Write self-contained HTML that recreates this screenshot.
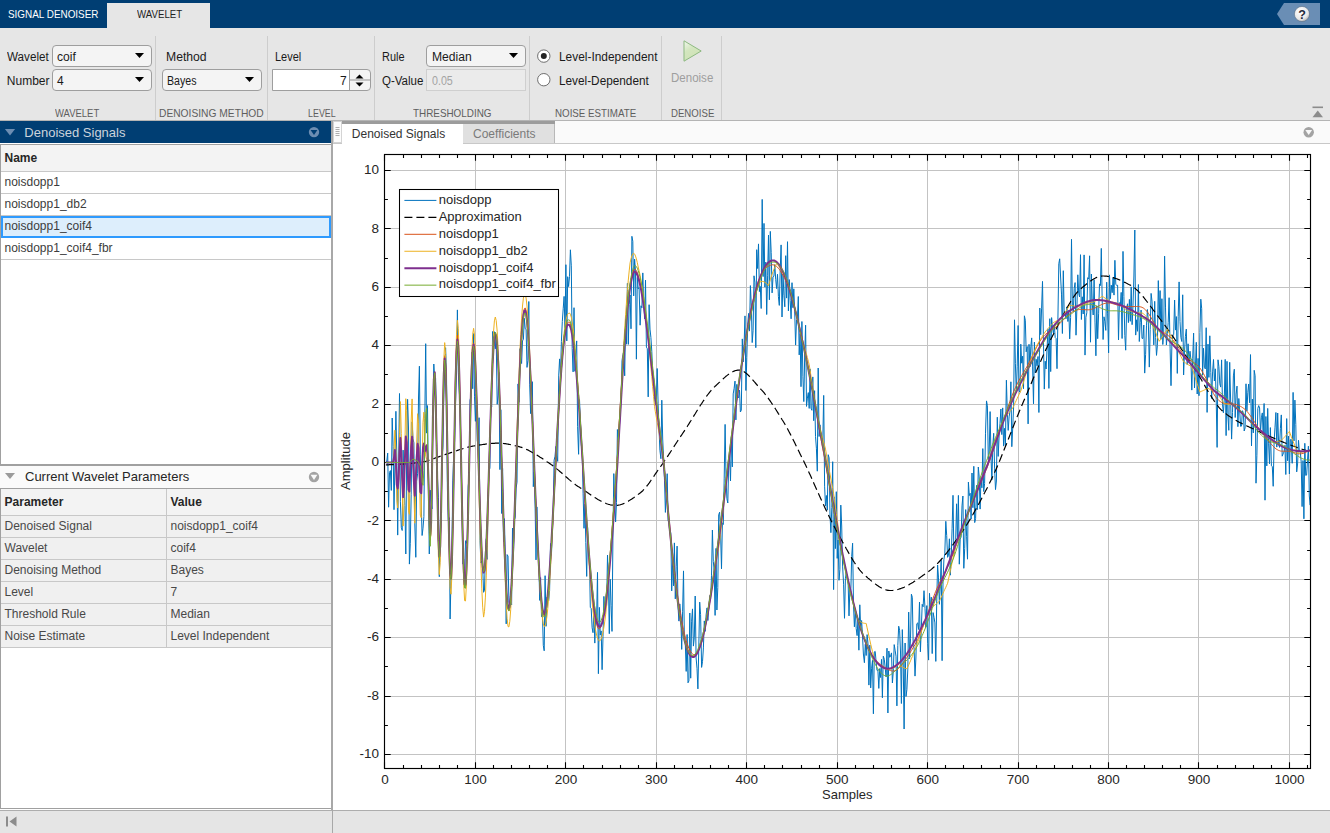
<!DOCTYPE html>
<html><head><meta charset="utf-8"><style>
html,body{margin:0;padding:0;}
body{width:1330px;height:833px;overflow:hidden;position:relative;background:#FFFFFF;font-family:"Liberation Sans",sans-serif;}
.t{position:absolute;white-space:nowrap;line-height:1;transform-origin:0 0;}
</style></head><body>
<div style="position:absolute;left:0px;top:0px;width:1330px;height:28px;background:#003E73"></div>
<div class="t" style="left:8.10px;top:8.69px;font-size:11px;color:#FFFFFF;transform:scaleX(0.9009);">SIGNAL DENOISER</div>
<div style="position:absolute;left:107px;top:3px;width:103px;height:25px;background:#E6E6E6"></div>
<div class="t" style="left:136.80px;top:8.69px;font-size:11px;color:#222222;transform:scaleX(0.8803);">WAVELET</div>
<svg style="position:absolute;left:1270px;top:0px" width="60" height="28" viewBox="1270 0 60 28">
<polygon points="1277,14 1284,3 1320,3 1320,25 1284,25" fill="#6A8EB5"/>
<defs><radialGradient id="hg" cx="0.4" cy="0.35" r="0.7"><stop offset="0" stop-color="#ffffff"/><stop offset="0.7" stop-color="#e8e8e8"/><stop offset="1" stop-color="#a9a9a9"/></radialGradient></defs>
<circle cx="1302" cy="14" r="7.6" fill="url(#hg)" stroke="#5a6f86" stroke-width="0.6"/>
<text x="1302" y="18.6" text-anchor="middle" font-family="Liberation Sans" font-weight="bold" font-size="12.5" fill="#1f2a3a">?</text>
</svg>
<div style="position:absolute;left:0px;top:28px;width:1330px;height:92px;background:#E6E6E6"></div>
<div style="position:absolute;left:0px;top:120px;width:1330px;height:1px;background:#B4B4B4"></div>
<div style="position:absolute;left:155px;top:36px;width:1px;height:84px;background:#CDCDCD"></div>
<div style="position:absolute;left:267px;top:36px;width:1px;height:84px;background:#CDCDCD"></div>
<div style="position:absolute;left:374px;top:36px;width:1px;height:84px;background:#CDCDCD"></div>
<div style="position:absolute;left:529px;top:36px;width:1px;height:84px;background:#CDCDCD"></div>
<div style="position:absolute;left:661px;top:36px;width:1px;height:84px;background:#CDCDCD"></div>
<div style="position:absolute;left:721px;top:36px;width:1px;height:84px;background:#CDCDCD"></div>
<div style="position:absolute;left:52px;top:45px;width:100px;height:22px;box-sizing:border-box;border:1px solid #9E9E9E;border-radius:4px;background:#F4F4F4"></div>
<svg style="position:absolute;left:135px;top:53px" width="10" height="6"><polygon points="0,0 9,0 4.5,5" fill="#000"/></svg>
<div style="position:absolute;left:52px;top:69px;width:100px;height:22px;box-sizing:border-box;border:1px solid #9E9E9E;border-radius:4px;background:#F4F4F4"></div>
<svg style="position:absolute;left:135px;top:77px" width="10" height="6"><polygon points="0,0 9,0 4.5,5" fill="#000"/></svg>
<div style="position:absolute;left:162px;top:69px;width:100px;height:22px;box-sizing:border-box;border:1px solid #9E9E9E;border-radius:4px;background:#F4F4F4"></div>
<svg style="position:absolute;left:245px;top:77px" width="10" height="6"><polygon points="0,0 9,0 4.5,5" fill="#000"/></svg>
<div style="position:absolute;left:426px;top:45px;width:100px;height:22px;box-sizing:border-box;border:1px solid #9E9E9E;border-radius:4px;background:#F4F4F4"></div>
<svg style="position:absolute;left:509px;top:53px" width="10" height="6"><polygon points="0,0 9,0 4.5,5" fill="#000"/></svg>
<div style="position:absolute;left:272px;top:69px;width:99px;height:22px;box-sizing:border-box;border:1px solid #9E9E9E;border-radius:0 4px 4px 0;background:#F4F4F4"></div>
<div style="position:absolute;left:273px;top:70px;width:76px;height:20px;background:#FFFFFF"></div>
<div style="position:absolute;left:349px;top:70px;width:1px;height:20px;background:#9E9E9E"></div>
<div style="position:absolute;left:350px;top:79px;width:20px;height:2px;background:#C4C4C4"></div>
<svg style="position:absolute;left:354px;top:72px" width="12" height="16"><polygon points="1.5,6.5 9.5,6.5 5.5,2.5" fill="#000"/><polygon points="1.5,10.5 9.5,10.5 5.5,14.5" fill="#000"/></svg>
<div style="position:absolute;left:426px;top:69px;width:100px;height:22px;box-sizing:border-box;border:1px solid #CFCFCF;background:#EBEBEB"></div>
<div class="t" style="left:6.80px;top:50.74px;font-size:12px;color:#1a1a1a;transform:scaleX(0.9720);">Wavelet</div>
<div class="t" style="left:57.10px;top:50.74px;font-size:12px;color:#1a1a1a;transform:scaleX(1.0056);">coif</div>
<div class="t" style="left:6.80px;top:74.64px;font-size:12px;color:#1a1a1a;">Number</div>
<div class="t" style="left:57.10px;top:74.64px;font-size:12px;color:#1a1a1a;">4</div>
<div class="t" style="left:165.90px;top:50.64px;font-size:12px;color:#1a1a1a;transform:scaleX(1.0145);">Method</div>
<div class="t" style="left:167.10px;top:74.64px;font-size:12px;color:#1a1a1a;transform:scaleX(0.8846);">Bayes</div>
<div class="t" style="left:275.00px;top:50.64px;font-size:12px;color:#1a1a1a;transform:scaleX(0.9131);">Level</div>
<div class="t" style="left:340.03px;top:74.64px;font-size:12px;color:#1a1a1a;">7</div>
<div class="t" style="left:382.20px;top:50.64px;font-size:12px;color:#1a1a1a;transform:scaleX(0.9115);">Rule</div>
<div class="t" style="left:431.70px;top:50.64px;font-size:12px;color:#1a1a1a;transform:scaleX(1.0112);">Median</div>
<div class="t" style="left:382.20px;top:74.64px;font-size:12px;color:#1a1a1a;transform:scaleX(0.9599);">Q-Value</div>
<div class="t" style="left:431.70px;top:74.64px;font-size:12px;color:#A3A3A3;transform:scaleX(0.8907);">0.05</div>
<svg style="position:absolute;left:535px;top:47px" width="18" height="42" viewBox="535 47 18 42">
<circle cx="543.8" cy="56.1" r="6.2" fill="#FFFFFF" stroke="#6E6E6E" stroke-width="1"/>
<circle cx="543.8" cy="56.1" r="3" fill="#222"/>
<circle cx="543.8" cy="79.7" r="6.2" fill="#FFFFFF" stroke="#6E6E6E" stroke-width="1"/>
</svg>
<div class="t" style="left:559.00px;top:50.64px;font-size:12px;color:#1a1a1a;transform:scaleX(0.9907);">Level-Independent</div>
<div class="t" style="left:559.00px;top:74.64px;font-size:12px;color:#1a1a1a;transform:scaleX(0.9825);">Level-Dependent</div>
<svg style="position:absolute;left:680px;top:38px" width="25" height="26" viewBox="680 38 25 26"><defs><linearGradient id="pg" x1="0" y1="0" x2="0.6" y2="1"><stop offset="0" stop-color="#F2F8EE"/><stop offset="0.45" stop-color="#D3E6BF"/><stop offset="1" stop-color="#CFE2B5"/></linearGradient></defs><polygon points="684,40.8 701.2,51 684,61.2" fill="url(#pg)" stroke="#8DB981" stroke-width="1" stroke-linejoin="round"/></svg>
<div class="t" style="left:671.00px;top:72.44px;font-size:12px;color:#9E9E9E;transform:scaleX(0.9608);">Denoise</div>
<div class="t" style="left:55.40px;top:107.59px;font-size:11px;color:#5E5E5E;transform:scaleX(0.8608);">WAVELET</div>
<div class="t" style="left:159.40px;top:107.59px;font-size:11px;color:#5E5E5E;transform:scaleX(0.9311);">DENOISING METHOD</div>
<div class="t" style="left:307.50px;top:107.59px;font-size:11px;color:#5E5E5E;transform:scaleX(0.8089);">LEVEL</div>
<div class="t" style="left:413.30px;top:107.59px;font-size:11px;color:#5E5E5E;transform:scaleX(0.8982);">THRESHOLDING</div>
<div class="t" style="left:555.40px;top:107.59px;font-size:11px;color:#5E5E5E;transform:scaleX(0.8877);">NOISE ESTIMATE</div>
<div class="t" style="left:670.50px;top:107.59px;font-size:11px;color:#5E5E5E;transform:scaleX(0.8746);">DENOISE</div>
<svg style="position:absolute;left:1310px;top:104px" width="16" height="16" viewBox="1310 104 16 16"><rect x="1312.5" y="106.5" width="10.5" height="1.6" fill="#8C8C8C"/><polygon points="1312.5,117.2 1323,117.2 1317.75,110.5" fill="#8C8C8C"/></svg>
<div style="position:absolute;left:0px;top:121px;width:332px;height:689px;background:#FFFFFF"></div>
<div style="position:absolute;left:0px;top:121px;width:332px;height:22px;background:#003E73"></div>
<svg style="position:absolute;left:0px;top:121px" width="332" height="22" viewBox="0 121 332 22"><polygon points="4.9,128.9 15.1,128.9 10,135.4" fill="#6C8DB2"/><circle cx="314" cy="132.1" r="5.2" fill="#6C8DB2"/><polygon points="310.6,129.9 317.4,129.9 314,135" fill="#003E73"/></svg>
<div class="t" style="left:24.30px;top:125.50px;font-size:13px;color:#CBD3DC;">Denoised Signals</div>
<div style="position:absolute;left:0px;top:143px;width:333px;height:323px;background:#FFFFFF"></div>
<div style="position:absolute;left:0px;top:144px;width:333px;height:322px;box-sizing:border-box;border:1px solid #A0A0A0;border-width:1px 2px 2px 1px;background:#FFFFFF"></div>
<div style="position:absolute;left:1px;top:145px;width:330px;height:26px;background:#F3F3F3"></div>
<div class="t" style="left:4.50px;top:151.64px;font-size:12px;font-weight:bold;color:#262626;">Name</div>
<div style="position:absolute;left:1px;top:171px;width:330px;height:1px;background:#C8C8C8"></div>
<div style="position:absolute;left:1px;top:193px;width:330px;height:1px;background:#C8C8C8"></div>
<div style="position:absolute;left:1px;top:215px;width:330px;height:1px;background:#C8C8C8"></div>
<div style="position:absolute;left:1px;top:237px;width:330px;height:1px;background:#C8C8C8"></div>
<div style="position:absolute;left:1px;top:259px;width:330px;height:1px;background:#C8C8C8"></div>
<div style="position:absolute;left:1px;top:216px;width:330px;height:22px;box-sizing:border-box;border:2px solid #2E9AFE;background:#DDEEFC"></div>
<div class="t" style="left:4.50px;top:176.44px;font-size:12px;color:#3C3C3C;">noisdopp1</div>
<div class="t" style="left:4.50px;top:198.44px;font-size:12px;color:#3C3C3C;">noisdopp1_db2</div>
<div class="t" style="left:4.50px;top:220.44px;font-size:12px;color:#3C3C3C;">noisdopp1_coif4</div>
<div class="t" style="left:4.50px;top:242.44px;font-size:12px;color:#3C3C3C;">noisdopp1_coif4_fbr</div>
<div style="position:absolute;left:0px;top:466px;width:332px;height:22px;background:#FAFAFA"></div>
<svg style="position:absolute;left:0px;top:466px" width="332" height="22" viewBox="0 466 332 22"><polygon points="5,473 15,473 10,478.9" fill="#9B9B9B"/><circle cx="314" cy="477" r="5.2" fill="#A3A3A3"/><polygon points="310.6,474.8 317.4,474.8 314,479.9" fill="#FAFAFA"/></svg>
<div class="t" style="left:25.00px;top:469.80px;font-size:13px;color:#262626;">Current Wavelet Parameters</div>
<div style="position:absolute;left:0px;top:488px;width:333px;height:321px;box-sizing:border-box;border:1px solid #A0A0A0;border-width:1px 2px 1px 1px;background:#FFFFFF"></div>
<div style="position:absolute;left:1px;top:489px;width:330px;height:26px;background:#F3F3F3"></div>
<div style="position:absolute;left:1px;top:515px;width:330px;height:133px;background:#F0F0F0"></div>
<div style="position:absolute;left:1px;top:515px;width:330px;height:1px;background:#C8C8C8"></div>
<div style="position:absolute;left:1px;top:537px;width:330px;height:1px;background:#C8C8C8"></div>
<div style="position:absolute;left:1px;top:559px;width:330px;height:1px;background:#C8C8C8"></div>
<div style="position:absolute;left:1px;top:581px;width:330px;height:1px;background:#C8C8C8"></div>
<div style="position:absolute;left:1px;top:603px;width:330px;height:1px;background:#C8C8C8"></div>
<div style="position:absolute;left:1px;top:625px;width:330px;height:1px;background:#C8C8C8"></div>
<div style="position:absolute;left:1px;top:647px;width:330px;height:1px;background:#C8C8C8"></div>
<div style="position:absolute;left:166px;top:489px;width:1px;height:159px;background:#C8C8C8"></div>
<div class="t" style="left:4.60px;top:495.64px;font-size:12px;font-weight:bold;color:#262626;">Parameter</div>
<div class="t" style="left:170.50px;top:495.64px;font-size:12px;font-weight:bold;color:#262626;">Value</div>
<div class="t" style="left:4.50px;top:520.44px;font-size:12px;color:#484848;">Denoised Signal</div>
<div class="t" style="left:170.50px;top:520.44px;font-size:12px;color:#484848;">noisdopp1_coif4</div>
<div class="t" style="left:4.50px;top:542.44px;font-size:12px;color:#484848;">Wavelet</div>
<div class="t" style="left:170.50px;top:542.44px;font-size:12px;color:#484848;">coif4</div>
<div class="t" style="left:4.50px;top:564.44px;font-size:12px;color:#484848;">Denoising Method</div>
<div class="t" style="left:170.50px;top:564.44px;font-size:12px;color:#484848;">Bayes</div>
<div class="t" style="left:4.50px;top:586.44px;font-size:12px;color:#484848;">Level</div>
<div class="t" style="left:170.50px;top:586.44px;font-size:12px;color:#484848;">7</div>
<div class="t" style="left:4.50px;top:608.44px;font-size:12px;color:#484848;">Threshold Rule</div>
<div class="t" style="left:170.50px;top:608.44px;font-size:12px;color:#484848;">Median</div>
<div class="t" style="left:4.50px;top:630.44px;font-size:12px;color:#484848;">Noise Estimate</div>
<div class="t" style="left:170.50px;top:630.44px;font-size:12px;color:#484848;">Level Independent</div>
<div style="position:absolute;left:333px;top:121px;width:997px;height:689px;background:#FFFFFF"></div>
<div style="position:absolute;left:333px;top:121px;width:997px;height:22px;background:#FAFAFA"></div>
<div style="position:absolute;left:342px;top:121px;width:213px;height:3px;background:#9C9C9C"></div>
<div style="position:absolute;left:333px;top:143px;width:997px;height:1px;background:#C8C8C8"></div>
<div style="position:absolute;left:342px;top:124px;width:121px;height:20px;background:#FFFFFF"></div>
<div style="position:absolute;left:463px;top:124px;width:92px;height:19px;box-sizing:border-box;border-right:1px solid #B8B8B8;background:#E0E0E0"></div>
<div style="position:absolute;left:333px;top:121px;width:9px;height:22px;box-sizing:border-box;border:1px solid #D4D4D4;background:#FCFCFC"></div>
<svg style="position:absolute;left:333px;top:121px" width="9" height="22"><g fill="#9A9A9A"><rect x="2.5" y="6" width="4" height="0.8"/><rect x="2.5" y="8" width="4" height="0.8"/><rect x="2.5" y="10" width="4" height="0.8"/><rect x="2.5" y="12" width="4" height="0.8"/><rect x="2.5" y="14" width="4" height="0.8"/></g></svg>
<div style="position:absolute;left:331px;top:121px;width:2px;height:689px;background:#A8A8A8"></div>
<div class="t" style="left:351.80px;top:127.84px;font-size:12px;color:#333333;">Denoised Signals</div>
<div class="t" style="left:473.00px;top:127.84px;font-size:12px;color:#7A7A7A;">Coefficients</div>
<svg style="position:absolute;left:1300px;top:124px" width="18" height="18" viewBox="1300 124 18 18"><circle cx="1308.7" cy="132.2" r="5.2" fill="#A3A3A3"/><polygon points="1305.3,130 1312.1,130 1308.7,135.1" fill="#F8F8F8"/></svg>
<div style="position:absolute;left:0px;top:810px;width:1330px;height:23px;background:#E5E5E5"></div>
<div style="position:absolute;left:0px;top:810px;width:1330px;height:1px;background:#ADADAD"></div>
<div style="position:absolute;left:332px;top:810px;width:1px;height:23px;background:#A8A8A8"></div>
<svg style="position:absolute;left:0px;top:812px" width="24" height="20" viewBox="0 812 24 20"><rect x="6" y="816.5" width="2" height="10" fill="#8C8C8C"/><polygon points="16.5,816.5 16.5,826.5 9.5,821.5" fill="#8C8C8C"/></svg>
<svg style="position:absolute;left:333px;top:144px" width="997" height="664" viewBox="333 144 997 664">
<defs><clipPath id="ax"><rect x="384.5" y="154.5" width="926.0" height="614.0"/></clipPath></defs>
<path d="M475.50 154.5V768.5M565.50 154.5V768.5M656.50 154.5V768.5M746.50 154.5V768.5M837.50 154.5V768.5M927.50 154.5V768.5M1018.50 154.5V768.5M1108.50 154.5V768.5M1198.50 154.5V768.5M1289.50 154.5V768.5M384.5 754.50H1310.5M384.5 696.50H1310.5M384.5 637.50H1310.5M384.5 579.50H1310.5M384.5 520.50H1310.5M384.5 462.50H1310.5M384.5 404.50H1310.5M384.5 345.50H1310.5M384.5 287.50H1310.5M384.5 228.50H1310.5M384.5 170.50H1310.5" stroke="#C3C3C3" stroke-width="1" fill="none"/>
<path d="M384.50 768.5v-6.2M384.50 154.5v6.2M403.50 768.5v-3.4M403.50 154.5v3.4M421.50 768.5v-3.4M421.50 154.5v3.4M439.50 768.5v-3.4M439.50 154.5v3.4M457.50 768.5v-3.4M457.50 154.5v3.4M475.50 768.5v-6.2M475.50 154.5v6.2M493.50 768.5v-3.4M493.50 154.5v3.4M511.50 768.5v-3.4M511.50 154.5v3.4M529.50 768.5v-3.4M529.50 154.5v3.4M547.50 768.5v-3.4M547.50 154.5v3.4M565.50 768.5v-6.2M565.50 154.5v6.2M583.50 768.5v-3.4M583.50 154.5v3.4M602.50 768.5v-3.4M602.50 154.5v3.4M620.50 768.5v-3.4M620.50 154.5v3.4M638.50 768.5v-3.4M638.50 154.5v3.4M656.50 768.5v-6.2M656.50 154.5v6.2M674.50 768.5v-3.4M674.50 154.5v3.4M692.50 768.5v-3.4M692.50 154.5v3.4M710.50 768.5v-3.4M710.50 154.5v3.4M728.50 768.5v-3.4M728.50 154.5v3.4M746.50 768.5v-6.2M746.50 154.5v6.2M764.50 768.5v-3.4M764.50 154.5v3.4M782.50 768.5v-3.4M782.50 154.5v3.4M801.50 768.5v-3.4M801.50 154.5v3.4M819.50 768.5v-3.4M819.50 154.5v3.4M837.50 768.5v-6.2M837.50 154.5v6.2M855.50 768.5v-3.4M855.50 154.5v3.4M873.50 768.5v-3.4M873.50 154.5v3.4M891.50 768.5v-3.4M891.50 154.5v3.4M909.50 768.5v-3.4M909.50 154.5v3.4M927.50 768.5v-6.2M927.50 154.5v6.2M945.50 768.5v-3.4M945.50 154.5v3.4M963.50 768.5v-3.4M963.50 154.5v3.4M981.50 768.5v-3.4M981.50 154.5v3.4M1000.50 768.5v-3.4M1000.50 154.5v3.4M1018.50 768.5v-6.2M1018.50 154.5v6.2M1036.50 768.5v-3.4M1036.50 154.5v3.4M1054.50 768.5v-3.4M1054.50 154.5v3.4M1072.50 768.5v-3.4M1072.50 154.5v3.4M1090.50 768.5v-3.4M1090.50 154.5v3.4M1108.50 768.5v-6.2M1108.50 154.5v6.2M1126.50 768.5v-3.4M1126.50 154.5v3.4M1144.50 768.5v-3.4M1144.50 154.5v3.4M1162.50 768.5v-3.4M1162.50 154.5v3.4M1180.50 768.5v-3.4M1180.50 154.5v3.4M1198.50 768.5v-6.2M1198.50 154.5v6.2M1217.50 768.5v-3.4M1217.50 154.5v3.4M1235.50 768.5v-3.4M1235.50 154.5v3.4M1253.50 768.5v-3.4M1253.50 154.5v3.4M1271.50 768.5v-3.4M1271.50 154.5v3.4M1289.50 768.5v-6.2M1289.50 154.5v6.2M1307.50 768.5v-3.4M1307.50 154.5v3.4M384.5 754.50h6.2M1310.5 754.50h-6.2M384.5 725.50h3.4M1310.5 725.50h-3.4M384.5 696.50h6.2M1310.5 696.50h-6.2M384.5 666.50h3.4M1310.5 666.50h-3.4M384.5 637.50h6.2M1310.5 637.50h-6.2M384.5 608.50h3.4M1310.5 608.50h-3.4M384.5 579.50h6.2M1310.5 579.50h-6.2M384.5 550.50h3.4M1310.5 550.50h-3.4M384.5 520.50h6.2M1310.5 520.50h-6.2M384.5 491.50h3.4M1310.5 491.50h-3.4M384.5 462.50h6.2M1310.5 462.50h-6.2M384.5 433.50h3.4M1310.5 433.50h-3.4M384.5 404.50h6.2M1310.5 404.50h-6.2M384.5 374.50h3.4M1310.5 374.50h-3.4M384.5 345.50h6.2M1310.5 345.50h-6.2M384.5 316.50h3.4M1310.5 316.50h-3.4M384.5 287.50h6.2M1310.5 287.50h-6.2M384.5 258.50h3.4M1310.5 258.50h-3.4M384.5 228.50h6.2M1310.5 228.50h-6.2M384.5 199.50h3.4M1310.5 199.50h-3.4M384.5 170.50h6.2M1310.5 170.50h-6.2" stroke="#000000" stroke-width="1.1" fill="none"/>
<g clip-path="url(#ax)" fill="none" stroke-linejoin="round">
<path d="M385.9 462.5 L386.8 461.1 L387.7 453.1 L388.6 507.2 L389.5 472.3 L390.4 470.6 L391.3 490.4 L392.2 418.0 L393.1 446.4 L394.0 509.7 L394.9 464.9 L395.9 411.3 L396.8 456.0 L397.7 535.1 L398.6 460.6 L399.5 393.5 L400.4 501.8 L401.3 527.5 L402.2 530.5 L403.1 450.1 L404.0 482.9 L404.9 505.5 L405.8 554.0 L406.7 451.0 L407.6 399.3 L408.5 428.0 L409.4 564.1 L410.3 543.3 L411.2 494.2 L412.1 421.9 L413.0 438.8 L413.9 442.8 L414.8 523.9 L415.8 557.3 L416.7 481.2 L417.6 473.8 L418.5 398.0 L419.4 366.2 L420.3 454.1 L421.2 503.1 L422.1 535.5 L423.0 528.2 L423.9 516.6 L424.8 418.4 L425.7 343.7 L426.6 433.1 L427.5 405.6 L428.4 485.7 L429.3 554.0 L430.2 490.1 L431.1 501.9 L432.0 508.9 L432.9 416.7 L433.8 364.0 L434.7 378.8 L435.6 378.1 L436.6 447.2 L437.5 478.8 L438.4 497.7 L439.3 576.7 L440.2 539.8 L441.1 523.8 L442.0 457.7 L442.9 447.6 L443.8 394.3 L444.7 369.3 L445.6 347.7 L446.5 371.9 L447.4 488.4 L448.3 520.1 L449.2 517.7 L450.1 619.0 L451.0 578.7 L451.9 552.5 L452.8 480.9 L453.7 455.5 L454.6 441.0 L455.5 403.4 L456.5 373.0 L457.4 309.9 L458.3 372.5 L459.2 390.1 L460.1 404.0 L461.0 457.7 L461.9 500.9 L462.8 564.1 L463.7 559.1 L464.6 586.6 L465.5 540.7 L466.4 543.3 L467.3 539.1 L468.2 486.3 L469.1 478.5 L470.0 400.2 L470.9 396.8 L471.8 352.1 L472.7 388.7 L473.6 333.6 L474.5 396.8 L475.4 421.3 L476.3 393.9 L477.3 441.1 L478.2 443.8 L479.1 417.7 L480.0 540.5 L480.9 563.0 L481.8 561.0 L482.7 567.0 L483.6 592.3 L484.5 590.1 L485.4 552.1 L486.3 538.7 L487.2 559.4 L488.1 502.7 L489.0 468.3 L489.9 468.7 L490.8 400.6 L491.7 406.8 L492.6 331.5 L493.5 338.2 L494.4 331.7 L495.3 348.8 L496.2 339.1 L497.2 404.3 L498.1 395.1 L499.0 372.4 L499.9 469.6 L500.8 409.7 L501.7 513.5 L502.6 468.4 L503.5 541.8 L504.4 518.6 L505.3 558.4 L506.2 623.9 L507.1 554.6 L508.0 556.1 L508.9 602.1 L509.8 605.0 L510.7 593.6 L511.6 605.0 L512.5 528.0 L513.4 556.4 L514.3 519.9 L515.2 517.7 L516.1 488.0 L517.0 482.2 L518.0 383.9 L518.9 402.2 L519.8 348.7 L520.7 358.2 L521.6 363.5 L522.5 340.9 L523.4 339.4 L524.3 318.3 L525.2 328.7 L526.1 329.4 L527.0 367.4 L527.9 360.5 L528.8 301.5 L529.7 384.8 L530.6 413.6 L531.5 392.3 L532.4 381.7 L533.3 486.7 L534.2 472.1 L535.1 506.0 L536.0 559.9 L536.9 506.9 L537.9 547.6 L538.8 561.6 L539.7 600.4 L540.6 577.6 L541.5 616.7 L542.4 612.5 L543.3 645.5 L544.2 650.8 L545.1 575.7 L546.0 626.3 L546.9 597.4 L547.8 598.9 L548.7 600.7 L549.6 590.5 L550.5 543.5 L551.4 555.4 L552.3 534.5 L553.2 512.0 L554.1 460.2 L555.0 456.3 L555.9 446.4 L556.8 455.6 L557.7 461.4 L558.7 375.9 L559.6 358.9 L560.5 375.7 L561.4 341.5 L562.3 321.6 L563.2 308.8 L564.1 296.4 L565.0 328.5 L565.9 264.7 L566.8 340.9 L567.7 276.7 L568.6 286.6 L569.5 276.5 L570.4 249.8 L571.3 265.8 L572.2 348.5 L573.1 371.9 L574.0 307.7 L574.9 371.3 L575.8 353.4 L576.7 340.9 L577.6 426.7 L578.6 454.3 L579.5 399.7 L580.4 421.0 L581.3 444.9 L582.2 452.1 L583.1 493.8 L584.0 528.3 L584.9 504.1 L585.8 542.4 L586.7 576.4 L587.6 527.3 L588.5 556.9 L589.4 555.4 L590.3 607.5 L591.2 608.3 L592.1 627.7 L593.0 632.7 L593.9 608.4 L594.8 643.1 L595.7 614.8 L596.6 619.0 L597.5 572.4 L598.4 673.7 L599.4 607.4 L600.3 635.0 L601.2 630.9 L602.1 669.7 L603.0 636.7 L603.9 596.4 L604.8 614.5 L605.7 602.7 L606.6 605.8 L607.5 555.0 L608.4 580.0 L609.3 633.7 L610.2 579.2 L611.1 605.4 L612.0 631.4 L612.9 540.1 L613.8 473.6 L614.7 498.8 L615.6 521.9 L616.5 502.6 L617.4 429.5 L618.3 441.5 L619.2 428.6 L620.2 415.8 L621.1 397.8 L622.0 360.8 L622.9 354.4 L623.8 351.2 L624.7 375.8 L625.6 319.4 L626.5 344.2 L627.4 283.3 L628.3 344.4 L629.2 304.5 L630.1 295.0 L631.0 328.8 L631.9 236.3 L632.8 241.3 L633.7 295.9 L634.6 259.1 L635.5 270.8 L636.4 359.2 L637.3 277.3 L638.2 288.8 L639.1 287.7 L640.1 325.2 L641.0 305.8 L641.9 307.8 L642.8 272.9 L643.7 303.3 L644.6 318.9 L645.5 280.1 L646.4 347.1 L647.3 348.7 L648.2 396.9 L649.1 304.7 L650.0 329.1 L650.9 337.4 L651.8 351.5 L652.7 374.7 L653.6 378.6 L654.5 399.2 L655.4 404.7 L656.3 404.1 L657.2 368.5 L658.1 403.3 L659.0 428.1 L659.9 450.2 L660.9 458.7 L661.8 400.2 L662.7 439.0 L663.6 458.6 L664.5 480.4 L665.4 512.4 L666.3 491.6 L667.2 473.7 L668.1 520.0 L669.0 524.4 L669.9 533.3 L670.8 532.5 L671.7 590.9 L672.6 559.6 L673.5 585.8 L674.4 542.9 L675.3 598.9 L676.2 566.8 L677.1 546.1 L678.0 606.4 L678.9 621.1 L679.8 603.9 L680.8 615.2 L681.7 649.4 L682.6 611.8 L683.5 570.9 L684.4 641.4 L685.3 643.5 L686.2 671.4 L687.1 634.5 L688.0 682.8 L688.9 680.9 L689.8 613.0 L690.7 678.2 L691.6 621.2 L692.5 608.9 L693.4 646.1 L694.3 637.4 L695.2 596.0 L696.1 657.9 L697.0 668.3 L697.9 688.9 L698.8 646.3 L699.7 602.1 L700.6 614.7 L701.6 667.4 L702.5 661.6 L703.4 647.9 L704.3 620.9 L705.2 631.4 L706.1 614.9 L707.0 607.9 L707.9 620.5 L708.8 608.0 L709.7 595.5 L710.6 598.6 L711.5 575.8 L712.4 530.0 L713.3 561.4 L714.2 570.9 L715.1 615.4 L716.0 548.4 L716.9 610.0 L717.8 587.6 L718.7 514.8 L719.6 512.2 L720.5 530.3 L721.5 568.8 L722.4 522.7 L723.3 524.5 L724.2 478.9 L725.1 424.4 L726.0 476.8 L726.9 498.7 L727.8 503.0 L728.7 463.3 L729.6 459.7 L730.5 481.0 L731.4 436.9 L732.3 466.9 L733.2 393.9 L734.1 388.5 L735.0 381.1 L735.9 419.9 L736.8 384.4 L737.7 396.8 L738.6 397.8 L739.5 390.1 L740.4 412.0 L741.3 410.1 L742.3 338.9 L743.2 361.9 L744.1 344.4 L745.0 315.9 L745.9 390.5 L746.8 357.6 L747.7 324.5 L748.6 313.4 L749.5 331.1 L750.4 285.6 L751.3 305.1 L752.2 342.6 L753.1 330.3 L754.0 275.8 L754.9 282.2 L755.8 347.7 L756.7 249.7 L757.6 268.5 L758.5 243.9 L759.4 291.6 L760.3 286.5 L761.2 308.5 L762.2 199.4 L763.1 276.6 L764.0 223.4 L764.9 287.1 L765.8 262.1 L766.7 314.5 L767.6 275.8 L768.5 235.1 L769.4 299.8 L770.3 231.4 L771.2 252.6 L772.1 292.9 L773.0 277.1 L773.9 276.1 L774.8 264.6 L775.7 279.4 L776.6 288.6 L777.5 274.3 L778.4 296.5 L779.3 305.4 L780.2 270.5 L781.1 244.9 L782.0 317.0 L783.0 274.1 L783.9 295.2 L784.8 306.8 L785.7 255.7 L786.6 298.1 L787.5 241.7 L788.4 310.9 L789.3 279.6 L790.2 300.4 L791.1 318.8 L792.0 282.7 L792.9 307.7 L793.8 288.8 L794.7 311.3 L795.6 345.1 L796.5 320.0 L797.4 319.2 L798.3 296.5 L799.2 354.9 L800.1 333.5 L801.0 386.7 L801.9 321.5 L802.9 376.2 L803.8 401.6 L804.7 354.9 L805.6 325.2 L806.5 406.4 L807.4 398.1 L808.3 392.6 L809.2 408.4 L810.1 368.9 L811.0 408.2 L811.9 410.3 L812.8 376.9 L813.7 420.7 L814.6 390.7 L815.5 436.4 L816.4 448.2 L817.3 471.2 L818.2 368.0 L819.1 436.5 L820.0 424.8 L820.9 437.6 L821.8 436.9 L822.7 444.9 L823.7 395.4 L824.6 486.2 L825.5 506.1 L826.4 495.5 L827.3 510.2 L828.2 454.7 L829.1 457.8 L830.0 515.0 L830.9 532.7 L831.8 507.6 L832.7 461.7 L833.6 589.6 L834.5 496.9 L835.4 548.6 L836.3 491.7 L837.2 558.4 L838.1 540.0 L839.0 580.3 L839.9 569.5 L840.8 505.1 L841.7 526.0 L842.6 566.1 L843.6 584.2 L844.5 618.3 L845.4 578.7 L846.3 572.2 L847.2 577.8 L848.1 582.0 L849.0 615.9 L849.9 588.8 L850.8 591.7 L851.7 556.5 L852.6 543.2 L853.5 605.1 L854.4 626.8 L855.3 609.6 L856.2 628.6 L857.1 635.6 L858.0 618.6 L858.9 650.2 L859.8 604.8 L860.7 628.3 L861.6 620.5 L862.5 635.7 L863.4 654.0 L864.4 662.7 L865.3 644.2 L866.2 655.5 L867.1 634.6 L868.0 643.6 L868.9 685.1 L869.8 645.1 L870.7 687.9 L871.6 668.3 L872.5 660.4 L873.4 713.8 L874.3 651.9 L875.2 651.4 L876.1 661.5 L877.0 670.4 L877.9 669.9 L878.8 688.4 L879.7 668.6 L880.6 677.5 L881.5 659.4 L882.4 697.8 L883.3 656.2 L884.3 659.3 L885.2 668.0 L886.1 676.9 L887.0 648.2 L887.9 713.0 L888.8 651.0 L889.7 657.3 L890.6 656.0 L891.5 652.9 L892.4 683.0 L893.3 671.1 L894.2 644.6 L895.1 650.2 L896.0 656.2 L896.9 705.9 L897.8 645.4 L898.7 626.2 L899.6 630.2 L900.5 652.0 L901.4 703.5 L902.3 629.6 L903.2 660.4 L904.1 729.0 L905.1 643.0 L906.0 696.5 L906.9 689.6 L907.8 669.1 L908.7 612.1 L909.6 658.8 L910.5 638.7 L911.4 594.2 L912.3 597.3 L913.2 645.4 L914.1 647.9 L915.0 676.1 L915.9 658.0 L916.8 623.7 L917.7 622.9 L918.6 629.5 L919.5 602.0 L920.4 651.8 L921.3 629.1 L922.2 604.3 L923.1 606.8 L924.0 590.7 L925.0 608.5 L925.9 627.2 L926.8 605.6 L927.7 643.5 L928.6 660.1 L929.5 593.3 L930.4 609.8 L931.3 597.1 L932.2 653.6 L933.1 612.6 L934.0 617.3 L934.9 622.9 L935.8 661.4 L936.7 603.1 L937.6 565.0 L938.5 577.9 L939.4 604.3 L940.3 585.0 L941.2 560.2 L942.1 660.7 L943.0 581.5 L943.9 559.7 L944.8 553.4 L945.8 521.3 L946.7 535.6 L947.6 557.3 L948.5 555.3 L949.4 538.8 L950.3 575.2 L951.2 558.3 L952.1 528.3 L953.0 495.3 L953.9 554.8 L954.8 549.2 L955.7 539.6 L956.6 503.8 L957.5 541.6 L958.4 495.4 L959.3 564.2 L960.2 539.1 L961.1 537.0 L962.0 505.9 L962.9 496.0 L963.8 568.3 L964.7 548.5 L965.7 509.6 L966.6 536.3 L967.5 559.2 L968.4 482.1 L969.3 495.6 L970.2 493.3 L971.1 519.2 L972.0 473.0 L972.9 507.7 L973.8 466.3 L974.7 522.6 L975.6 518.6 L976.5 485.4 L977.4 509.6 L978.3 467.0 L979.2 476.9 L980.1 509.1 L981.0 477.7 L981.9 487.8 L982.8 448.6 L983.7 491.5 L984.6 483.6 L985.5 433.2 L986.5 400.9 L987.4 405.7 L988.3 459.6 L989.2 452.6 L990.1 411.6 L991.0 457.5 L991.9 479.9 L992.8 445.5 L993.7 433.3 L994.6 468.2 L995.5 489.6 L996.4 481.0 L997.3 417.2 L998.2 456.4 L999.1 436.0 L1000.0 423.3 L1000.9 409.0 L1001.8 434.6 L1002.7 407.9 L1003.6 446.1 L1004.5 428.4 L1005.4 445.5 L1006.4 380.2 L1007.3 411.8 L1008.2 430.4 L1009.1 416.9 L1010.0 410.9 L1010.9 381.8 L1011.8 446.7 L1012.7 428.2 L1013.6 406.9 L1014.5 319.8 L1015.4 363.7 L1016.3 392.8 L1017.2 366.8 L1018.1 325.5 L1019.0 390.4 L1019.9 392.3 L1020.8 344.2 L1021.7 363.2 L1022.6 356.2 L1023.5 388.7 L1024.4 315.8 L1025.3 320.2 L1026.2 351.8 L1027.2 346.5 L1028.1 423.9 L1029.0 344.3 L1029.9 366.9 L1030.8 346.8 L1031.7 337.9 L1032.6 366.1 L1033.5 403.8 L1034.4 342.1 L1035.3 372.9 L1036.2 359.3 L1037.1 365.8 L1038.0 356.5 L1038.9 412.5 L1039.8 308.0 L1040.7 334.7 L1041.6 308.2 L1042.5 281.4 L1043.4 337.2 L1044.3 389.1 L1045.2 361.2 L1046.1 369.0 L1047.1 347.1 L1048.0 328.8 L1048.9 388.4 L1049.8 318.7 L1050.7 371.6 L1051.6 317.6 L1052.5 328.3 L1053.4 333.1 L1054.3 325.0 L1055.2 337.5 L1056.1 338.5 L1057.0 368.7 L1057.9 319.4 L1058.8 263.7 L1059.7 258.8 L1060.6 277.0 L1061.5 294.1 L1062.4 333.5 L1063.3 270.7 L1064.2 313.6 L1065.1 313.2 L1066.0 318.8 L1066.9 306.8 L1067.9 321.5 L1068.8 310.4 L1069.7 338.9 L1070.6 317.5 L1071.5 239.3 L1072.4 307.2 L1073.3 311.5 L1074.2 288.4 L1075.1 282.6 L1076.0 335.2 L1076.9 308.2 L1077.8 274.8 L1078.7 293.2 L1079.6 297.0 L1080.5 254.7 L1081.4 319.5 L1082.3 296.8 L1083.2 314.0 L1084.1 254.9 L1085.0 355.1 L1085.9 317.3 L1086.8 312.8 L1087.7 277.7 L1088.7 279.1 L1089.6 255.8 L1090.5 342.2 L1091.4 274.1 L1092.3 304.4 L1093.2 315.0 L1094.1 279.7 L1095.0 322.1 L1095.9 355.8 L1096.8 305.8 L1097.7 338.7 L1098.6 313.8 L1099.5 283.9 L1100.4 285.6 L1101.3 248.4 L1102.2 300.5 L1103.1 339.5 L1104.0 316.8 L1104.9 321.6 L1105.8 330.4 L1106.7 282.2 L1107.6 313.9 L1108.6 352.9 L1109.5 274.9 L1110.4 298.7 L1111.3 285.2 L1112.2 292.7 L1113.1 277.5 L1114.0 295.1 L1114.9 260.3 L1115.8 284.2 L1116.7 285.5 L1117.6 285.2 L1118.5 340.0 L1119.4 302.6 L1120.3 305.7 L1121.2 292.4 L1122.1 338.5 L1123.0 251.4 L1123.9 296.5 L1124.8 335.3 L1125.7 350.2 L1126.6 309.0 L1127.5 303.8 L1128.4 322.6 L1129.4 299.4 L1130.3 321.3 L1131.2 286.9 L1132.1 324.7 L1133.0 305.2 L1133.9 276.0 L1134.8 230.0 L1135.7 335.1 L1136.6 319.8 L1137.5 331.3 L1138.4 284.5 L1139.3 341.5 L1140.2 322.7 L1141.1 310.1 L1142.0 338.4 L1142.9 338.4 L1143.8 325.0 L1144.7 373.1 L1145.6 354.7 L1146.5 325.2 L1147.4 309.5 L1148.3 320.0 L1149.3 367.1 L1150.2 329.5 L1151.1 293.4 L1152.0 301.2 L1152.9 320.5 L1153.8 344.9 L1154.7 301.3 L1155.6 337.4 L1156.5 355.4 L1157.4 345.5 L1158.3 280.6 L1159.2 317.2 L1160.1 290.6 L1161.0 339.3 L1161.9 298.7 L1162.8 344.5 L1163.7 332.4 L1164.6 256.1 L1165.5 307.1 L1166.4 345.0 L1167.3 333.7 L1168.2 322.6 L1169.1 297.7 L1170.1 348.2 L1171.0 385.7 L1171.9 343.9 L1172.8 336.2 L1173.7 334.3 L1174.6 300.0 L1175.5 330.1 L1176.4 316.6 L1177.3 373.4 L1178.2 316.8 L1179.1 281.9 L1180.0 321.5 L1180.9 337.6 L1181.8 341.5 L1182.7 294.8 L1183.6 375.0 L1184.5 352.1 L1185.4 336.4 L1186.3 329.1 L1187.2 364.6 L1188.1 343.8 L1189.0 361.9 L1190.0 351.2 L1190.9 359.6 L1191.8 390.1 L1192.7 358.3 L1193.6 333.1 L1194.5 388.0 L1195.4 367.8 L1196.3 342.3 L1197.2 394.0 L1198.1 358.4 L1199.0 395.7 L1199.9 332.6 L1200.8 299.2 L1201.7 308.7 L1202.6 375.2 L1203.5 348.2 L1204.4 367.3 L1205.3 368.9 L1206.2 327.7 L1207.1 412.4 L1208.0 344.1 L1208.9 377.4 L1209.8 335.8 L1210.8 372.5 L1211.7 398.6 L1212.6 371.9 L1213.5 359.5 L1214.4 381.0 L1215.3 368.8 L1216.2 399.3 L1217.1 447.4 L1218.0 359.8 L1218.9 366.7 L1219.8 383.8 L1220.7 387.1 L1221.6 359.9 L1222.5 404.5 L1223.4 412.8 L1224.3 398.7 L1225.2 359.4 L1226.1 435.6 L1227.0 361.3 L1227.9 415.8 L1228.8 430.3 L1229.7 362.3 L1230.7 402.9 L1231.6 439.1 L1232.5 412.5 L1233.4 375.9 L1234.3 369.2 L1235.2 417.5 L1236.1 394.1 L1237.0 386.1 L1237.9 426.7 L1238.8 398.5 L1239.7 410.7 L1240.6 426.4 L1241.5 426.1 L1242.4 410.7 L1243.3 412.7 L1244.2 431.0 L1245.1 427.9 L1246.0 383.8 L1246.9 411.0 L1247.8 392.3 L1248.7 384.0 L1249.6 402.8 L1250.5 354.6 L1251.5 445.9 L1252.4 399.1 L1253.3 432.9 L1254.2 370.3 L1255.1 375.7 L1256.0 483.2 L1256.9 455.3 L1257.8 408.5 L1258.7 405.6 L1259.6 408.0 L1260.5 432.4 L1261.4 417.8 L1262.3 412.9 L1263.2 435.0 L1264.1 403.5 L1265.0 500.2 L1265.9 416.5 L1266.8 465.9 L1267.7 408.4 L1268.6 443.8 L1269.5 463.8 L1270.4 427.6 L1271.4 465.8 L1272.3 466.5 L1273.2 486.3 L1274.1 441.9 L1275.0 427.2 L1275.9 412.5 L1276.8 447.1 L1277.7 413.0 L1278.6 443.6 L1279.5 447.4 L1280.4 428.5 L1281.3 414.9 L1282.2 456.2 L1283.1 453.9 L1284.0 452.0 L1284.9 445.3 L1285.8 474.5 L1286.7 418.6 L1287.6 460.8 L1288.5 436.0 L1289.4 474.0 L1290.3 439.8 L1291.2 439.2 L1292.2 463.3 L1293.1 392.4 L1294.0 440.9 L1294.9 400.1 L1295.8 424.3 L1296.7 471.9 L1297.6 464.0 L1298.5 440.3 L1299.4 451.5 L1300.3 452.0 L1301.2 462.0 L1302.1 506.6 L1303.0 460.5 L1303.9 518.8 L1304.8 443.3 L1305.7 475.4 L1306.6 475.1 L1307.5 460.6 L1308.4 446.2 L1309.3 496.0 L1310.2 505.1 L1311.1 485.1" stroke="#0072BD" stroke-width="1"/>
<path d="M385.9 464.8 L386.8 464.8 L387.7 464.8 L388.6 464.8 L389.5 464.7 L390.4 464.7 L391.3 464.7 L392.2 464.7 L393.1 464.6 L394.0 464.6 L394.9 464.5 L395.9 464.5 L396.8 464.5 L397.7 464.4 L398.6 464.4 L399.5 464.3 L400.4 464.2 L401.3 464.2 L402.2 464.1 L403.1 464.1 L404.0 464.0 L404.9 463.9 L405.8 463.8 L406.7 463.8 L407.6 463.7 L408.5 463.6 L409.4 463.5 L410.3 463.4 L411.2 463.3 L412.1 463.3 L413.0 463.2 L413.9 463.1 L414.8 463.0 L415.8 462.9 L416.7 462.8 L417.6 462.7 L418.5 462.6 L419.4 462.5 L420.3 462.4 L421.2 462.3 L422.1 462.1 L423.0 461.9 L423.9 461.7 L424.8 461.5 L425.7 461.3 L426.6 461.0 L427.5 460.8 L428.4 460.5 L429.3 460.2 L430.2 459.9 L431.1 459.6 L432.0 459.3 L432.9 458.9 L433.8 458.6 L434.7 458.2 L435.6 457.9 L436.6 457.6 L437.5 457.2 L438.4 456.9 L439.3 456.6 L440.2 456.2 L441.1 455.9 L442.0 455.6 L442.9 455.3 L443.8 455.0 L444.7 454.7 L445.6 454.4 L446.5 454.1 L447.4 453.9 L448.3 453.6 L449.2 453.2 L450.1 452.9 L451.0 452.6 L451.9 452.3 L452.8 452.0 L453.7 451.7 L454.6 451.4 L455.5 451.1 L456.5 450.8 L457.4 450.4 L458.3 450.1 L459.2 449.8 L460.1 449.5 L461.0 449.2 L461.9 449.0 L462.8 448.7 L463.7 448.4 L464.6 448.1 L465.5 447.9 L466.4 447.6 L467.3 447.4 L468.2 447.1 L469.1 446.9 L470.0 446.7 L470.9 446.5 L471.8 446.3 L472.7 446.1 L473.6 446.0 L474.5 445.8 L475.4 445.7 L476.3 445.5 L477.3 445.4 L478.2 445.2 L479.1 445.1 L480.0 444.9 L480.9 444.8 L481.8 444.7 L482.7 444.5 L483.6 444.4 L484.5 444.3 L485.4 444.1 L486.3 444.0 L487.2 443.9 L488.1 443.8 L489.0 443.7 L489.9 443.6 L490.8 443.5 L491.7 443.4 L492.6 443.4 L493.5 443.3 L494.4 443.3 L495.3 443.2 L496.2 443.2 L497.2 443.2 L498.1 443.2 L499.0 443.2 L499.9 443.2 L500.8 443.2 L501.7 443.3 L502.6 443.4 L503.5 443.5 L504.4 443.6 L505.3 443.7 L506.2 443.8 L507.1 444.0 L508.0 444.1 L508.9 444.3 L509.8 444.5 L510.7 444.7 L511.6 444.9 L512.5 445.1 L513.4 445.3 L514.3 445.5 L515.2 445.7 L516.1 446.0 L517.0 446.2 L518.0 446.4 L518.9 446.6 L519.8 446.9 L520.7 447.1 L521.6 447.4 L522.5 447.7 L523.4 448.0 L524.3 448.4 L525.2 448.8 L526.1 449.2 L527.0 449.6 L527.9 450.0 L528.8 450.4 L529.7 450.9 L530.6 451.4 L531.5 451.9 L532.4 452.4 L533.3 452.9 L534.2 453.5 L535.1 454.0 L536.0 454.6 L536.9 455.1 L537.9 455.7 L538.8 456.3 L539.7 456.9 L540.6 457.4 L541.5 458.0 L542.4 458.6 L543.3 459.2 L544.2 459.8 L545.1 460.4 L546.0 461.0 L546.9 461.7 L547.8 462.2 L548.7 462.8 L549.6 463.4 L550.5 464.0 L551.4 464.7 L552.3 465.3 L553.2 466.0 L554.1 466.7 L555.0 467.4 L555.9 468.1 L556.8 468.9 L557.7 469.6 L558.7 470.4 L559.6 471.2 L560.5 472.0 L561.4 472.7 L562.3 473.5 L563.2 474.3 L564.1 475.1 L565.0 475.9 L565.9 476.7 L566.8 477.5 L567.7 478.3 L568.6 479.1 L569.5 479.9 L570.4 480.6 L571.3 481.4 L572.2 482.1 L573.1 482.8 L574.0 483.5 L574.9 484.2 L575.8 484.9 L576.7 485.5 L577.6 486.2 L578.6 486.8 L579.5 487.3 L580.4 487.9 L581.3 488.5 L582.2 489.1 L583.1 489.7 L584.0 490.3 L584.9 490.9 L585.8 491.5 L586.7 492.1 L587.6 492.7 L588.5 493.3 L589.4 493.9 L590.3 494.5 L591.2 495.2 L592.1 495.8 L593.0 496.4 L593.9 496.9 L594.8 497.5 L595.7 498.1 L596.6 498.6 L597.5 499.2 L598.4 499.7 L599.4 500.2 L600.3 500.7 L601.2 501.2 L602.1 501.7 L603.0 502.1 L603.9 502.5 L604.8 502.9 L605.7 503.3 L606.6 503.7 L607.5 504.0 L608.4 504.3 L609.3 504.5 L610.2 504.8 L611.1 505.0 L612.0 505.1 L612.9 505.2 L613.8 505.3 L614.7 505.4 L615.6 505.4 L616.5 505.4 L617.4 505.3 L618.3 505.2 L619.2 505.0 L620.2 504.8 L621.1 504.5 L622.0 504.2 L622.9 503.9 L623.8 503.5 L624.7 503.1 L625.6 502.7 L626.5 502.2 L627.4 501.7 L628.3 501.2 L629.2 500.6 L630.1 500.1 L631.0 499.5 L631.9 498.9 L632.8 498.3 L633.7 497.7 L634.6 497.0 L635.5 496.4 L636.4 495.7 L637.3 495.1 L638.2 494.4 L639.1 493.7 L640.1 493.1 L641.0 492.3 L641.9 491.5 L642.8 490.7 L643.7 489.7 L644.6 488.7 L645.5 487.7 L646.4 486.6 L647.3 485.5 L648.2 484.3 L649.1 483.1 L650.0 481.8 L650.9 480.5 L651.8 479.2 L652.7 477.9 L653.6 476.6 L654.5 475.3 L655.4 473.9 L656.3 472.6 L657.2 471.3 L658.1 469.9 L659.0 468.6 L659.9 467.4 L660.9 466.1 L661.8 464.8 L662.7 463.6 L663.6 462.3 L664.5 460.9 L665.4 459.6 L666.3 458.3 L667.2 457.0 L668.1 455.6 L669.0 454.2 L669.9 452.9 L670.8 451.5 L671.7 450.1 L672.6 448.7 L673.5 447.3 L674.4 445.9 L675.3 444.5 L676.2 443.2 L677.1 441.8 L678.0 440.4 L678.9 439.0 L679.8 437.6 L680.8 436.2 L681.7 434.9 L682.6 433.5 L683.5 432.1 L684.4 430.8 L685.3 429.5 L686.2 428.1 L687.1 426.7 L688.0 425.3 L688.9 423.9 L689.8 422.4 L690.7 421.0 L691.6 419.5 L692.5 418.1 L693.4 416.6 L694.3 415.1 L695.2 413.7 L696.1 412.2 L697.0 410.7 L697.9 409.3 L698.8 407.8 L699.7 406.4 L700.6 405.0 L701.6 403.6 L702.5 402.2 L703.4 400.8 L704.3 399.5 L705.2 398.2 L706.1 396.9 L707.0 395.7 L707.9 394.5 L708.8 393.3 L709.7 392.2 L710.6 391.1 L711.5 390.0 L712.4 389.0 L713.3 388.1 L714.2 387.2 L715.1 386.3 L716.0 385.5 L716.9 384.6 L717.8 383.8 L718.7 382.9 L719.6 382.1 L720.5 381.2 L721.5 380.3 L722.4 379.5 L723.3 378.7 L724.2 377.9 L725.1 377.1 L726.0 376.3 L726.9 375.6 L727.8 374.9 L728.7 374.2 L729.6 373.5 L730.5 373.0 L731.4 372.4 L732.3 371.9 L733.2 371.5 L734.1 371.1 L735.0 370.7 L735.9 370.5 L736.8 370.3 L737.7 370.1 L738.6 370.1 L739.5 370.1 L740.4 370.2 L741.3 370.5 L742.3 370.8 L743.2 371.3 L744.1 371.8 L745.0 372.4 L745.9 373.1 L746.8 373.8 L747.7 374.6 L748.6 375.5 L749.5 376.4 L750.4 377.3 L751.3 378.3 L752.2 379.3 L753.1 380.3 L754.0 381.4 L754.9 382.4 L755.8 383.5 L756.7 384.5 L757.6 385.6 L758.5 386.6 L759.4 387.6 L760.3 388.6 L761.2 389.6 L762.2 390.6 L763.1 391.6 L764.0 392.7 L764.9 393.9 L765.8 395.0 L766.7 396.2 L767.6 397.4 L768.5 398.6 L769.4 399.9 L770.3 401.2 L771.2 402.5 L772.1 403.8 L773.0 405.2 L773.9 406.5 L774.8 407.9 L775.7 409.3 L776.6 410.7 L777.5 412.1 L778.4 413.6 L779.3 415.0 L780.2 416.5 L781.1 418.0 L782.0 419.5 L783.0 421.0 L783.9 422.5 L784.8 424.0 L785.7 425.6 L786.6 427.2 L787.5 428.8 L788.4 430.5 L789.3 432.2 L790.2 433.9 L791.1 435.6 L792.0 437.4 L792.9 439.2 L793.8 441.0 L794.7 442.8 L795.6 444.7 L796.5 446.5 L797.4 448.3 L798.3 450.2 L799.2 452.0 L800.1 453.9 L801.0 455.7 L801.9 457.6 L802.9 459.4 L803.8 461.3 L804.7 463.2 L805.6 465.1 L806.5 467.0 L807.4 468.9 L808.3 470.9 L809.2 472.9 L810.1 474.8 L811.0 476.8 L811.9 478.8 L812.8 480.9 L813.7 482.9 L814.6 484.9 L815.5 486.9 L816.4 489.0 L817.3 491.0 L818.2 493.0 L819.1 495.0 L820.0 497.0 L820.9 499.0 L821.8 501.0 L822.7 503.0 L823.7 505.0 L824.6 507.0 L825.5 508.9 L826.4 510.8 L827.3 512.7 L828.2 514.6 L829.1 516.5 L830.0 518.3 L830.9 520.2 L831.8 521.9 L832.7 523.7 L833.6 525.4 L834.5 527.1 L835.4 528.8 L836.3 530.4 L837.2 532.1 L838.1 533.7 L839.0 535.4 L839.9 537.1 L840.8 538.7 L841.7 540.4 L842.6 542.1 L843.6 543.7 L844.5 545.4 L845.4 547.0 L846.3 548.7 L847.2 550.3 L848.1 551.9 L849.0 553.5 L849.9 555.1 L850.8 556.6 L851.7 558.1 L852.6 559.6 L853.5 561.1 L854.4 562.5 L855.3 563.8 L856.2 565.2 L857.1 566.5 L858.0 567.7 L858.9 568.9 L859.8 570.1 L860.7 571.2 L861.6 572.2 L862.5 573.2 L863.4 574.1 L864.4 575.0 L865.3 575.8 L866.2 576.5 L867.1 577.3 L868.0 578.1 L868.9 578.8 L869.8 579.6 L870.7 580.3 L871.6 581.1 L872.5 581.8 L873.4 582.5 L874.3 583.2 L875.2 583.9 L876.1 584.6 L877.0 585.2 L877.9 585.8 L878.8 586.4 L879.7 587.0 L880.6 587.5 L881.5 588.0 L882.4 588.4 L883.3 588.9 L884.3 589.2 L885.2 589.6 L886.1 589.9 L887.0 590.1 L887.9 590.3 L888.8 590.4 L889.7 590.5 L890.6 590.5 L891.5 590.5 L892.4 590.5 L893.3 590.4 L894.2 590.3 L895.1 590.1 L896.0 589.9 L896.9 589.7 L897.8 589.5 L898.7 589.2 L899.6 588.9 L900.5 588.6 L901.4 588.3 L902.3 587.9 L903.2 587.6 L904.1 587.2 L905.1 586.7 L906.0 586.3 L906.9 585.8 L907.8 585.4 L908.7 584.9 L909.6 584.3 L910.5 583.8 L911.4 583.3 L912.3 582.7 L913.2 582.2 L914.1 581.6 L915.0 581.0 L915.9 580.4 L916.8 579.8 L917.7 579.2 L918.6 578.5 L919.5 577.9 L920.4 577.3 L921.3 576.6 L922.2 576.0 L923.1 575.3 L924.0 574.7 L925.0 574.1 L925.9 573.4 L926.8 572.8 L927.7 572.1 L928.6 571.5 L929.5 570.8 L930.4 570.1 L931.3 569.4 L932.2 568.6 L933.1 567.8 L934.0 567.0 L934.9 566.2 L935.8 565.3 L936.7 564.4 L937.6 563.4 L938.5 562.5 L939.4 561.5 L940.3 560.5 L941.2 559.5 L942.1 558.4 L943.0 557.3 L943.9 556.3 L944.8 555.2 L945.8 554.0 L946.7 552.9 L947.6 551.7 L948.5 550.6 L949.4 549.4 L950.3 548.2 L951.2 547.0 L952.1 545.8 L953.0 544.6 L953.9 543.4 L954.8 542.1 L955.7 540.9 L956.6 539.7 L957.5 538.4 L958.4 537.2 L959.3 535.9 L960.2 534.6 L961.1 533.3 L962.0 532.0 L962.9 530.6 L963.8 529.2 L964.7 527.9 L965.7 526.4 L966.6 525.0 L967.5 523.6 L968.4 522.1 L969.3 520.6 L970.2 519.1 L971.1 517.6 L972.0 516.0 L972.9 514.5 L973.8 512.9 L974.7 511.3 L975.6 509.7 L976.5 508.1 L977.4 506.4 L978.3 504.8 L979.2 503.1 L980.1 501.4 L981.0 499.7 L981.9 498.0 L982.8 496.3 L983.7 494.5 L984.6 492.8 L985.5 491.0 L986.5 489.2 L987.4 487.5 L988.3 485.6 L989.2 483.8 L990.1 482.0 L991.0 480.2 L991.9 478.3 L992.8 476.4 L993.7 474.5 L994.6 472.5 L995.5 470.5 L996.4 468.5 L997.3 466.4 L998.2 464.3 L999.1 462.1 L1000.0 460.0 L1000.9 457.8 L1001.8 455.5 L1002.7 453.3 L1003.6 451.0 L1004.5 448.8 L1005.4 446.5 L1006.4 444.2 L1007.3 441.9 L1008.2 439.5 L1009.1 437.2 L1010.0 434.9 L1010.9 432.6 L1011.8 430.3 L1012.7 428.0 L1013.6 425.7 L1014.5 423.4 L1015.4 421.1 L1016.3 418.9 L1017.2 416.6 L1018.1 414.4 L1019.0 412.2 L1019.9 410.0 L1020.8 407.9 L1021.7 405.8 L1022.6 403.7 L1023.5 401.5 L1024.4 399.4 L1025.3 397.3 L1026.2 395.1 L1027.2 393.0 L1028.1 390.8 L1029.0 388.7 L1029.9 386.5 L1030.8 384.4 L1031.7 382.2 L1032.6 380.1 L1033.5 378.0 L1034.4 375.8 L1035.3 373.7 L1036.2 371.6 L1037.1 369.5 L1038.0 367.4 L1038.9 365.3 L1039.8 363.2 L1040.7 361.2 L1041.6 359.1 L1042.5 357.1 L1043.4 355.1 L1044.3 353.1 L1045.2 351.1 L1046.1 349.1 L1047.1 347.2 L1048.0 345.2 L1048.9 343.3 L1049.8 341.5 L1050.7 339.6 L1051.6 337.8 L1052.5 336.0 L1053.4 334.2 L1054.3 332.4 L1055.2 330.7 L1056.1 329.0 L1057.0 327.2 L1057.9 325.5 L1058.8 323.7 L1059.7 321.9 L1060.6 320.1 L1061.5 318.3 L1062.4 316.6 L1063.3 314.8 L1064.2 313.1 L1065.1 311.4 L1066.0 309.7 L1066.9 308.0 L1067.9 306.4 L1068.8 304.8 L1069.7 303.2 L1070.6 301.7 L1071.5 300.2 L1072.4 298.8 L1073.3 297.4 L1074.2 296.1 L1075.1 294.9 L1076.0 293.7 L1076.9 292.6 L1077.8 291.6 L1078.7 290.7 L1079.6 289.8 L1080.5 289.0 L1081.4 288.3 L1082.3 287.5 L1083.2 286.7 L1084.1 286.0 L1085.0 285.2 L1085.9 284.5 L1086.8 283.7 L1087.7 283.0 L1088.7 282.3 L1089.6 281.7 L1090.5 281.0 L1091.4 280.4 L1092.3 279.8 L1093.2 279.3 L1094.1 278.7 L1095.0 278.3 L1095.9 277.8 L1096.8 277.4 L1097.7 277.1 L1098.6 276.7 L1099.5 276.5 L1100.4 276.3 L1101.3 276.1 L1102.2 276.0 L1103.1 276.0 L1104.0 276.0 L1104.9 276.1 L1105.8 276.1 L1106.7 276.2 L1107.6 276.3 L1108.6 276.5 L1109.5 276.7 L1110.4 276.9 L1111.3 277.1 L1112.2 277.3 L1113.1 277.6 L1114.0 277.9 L1114.9 278.2 L1115.8 278.5 L1116.7 278.8 L1117.6 279.1 L1118.5 279.5 L1119.4 279.9 L1120.3 280.3 L1121.2 280.7 L1122.1 281.1 L1123.0 281.5 L1123.9 281.9 L1124.8 282.4 L1125.7 282.8 L1126.6 283.3 L1127.5 283.7 L1128.4 284.2 L1129.4 284.7 L1130.3 285.1 L1131.2 285.6 L1132.1 286.2 L1133.0 286.8 L1133.9 287.4 L1134.8 288.1 L1135.7 288.9 L1136.6 289.7 L1137.5 290.5 L1138.4 291.4 L1139.3 292.4 L1140.2 293.3 L1141.1 294.3 L1142.0 295.4 L1142.9 296.4 L1143.8 297.5 L1144.7 298.7 L1145.6 299.8 L1146.5 301.0 L1147.4 302.2 L1148.3 303.3 L1149.3 304.6 L1150.2 305.8 L1151.1 307.0 L1152.0 308.2 L1152.9 309.5 L1153.8 310.7 L1154.7 311.9 L1155.6 313.1 L1156.5 314.4 L1157.4 315.6 L1158.3 316.7 L1159.2 317.9 L1160.1 319.1 L1161.0 320.2 L1161.9 321.4 L1162.8 322.6 L1163.7 323.8 L1164.6 325.0 L1165.5 326.2 L1166.4 327.5 L1167.3 328.7 L1168.2 330.0 L1169.1 331.2 L1170.1 332.5 L1171.0 333.8 L1171.9 335.1 L1172.8 336.4 L1173.7 337.7 L1174.6 339.0 L1175.5 340.3 L1176.4 341.6 L1177.3 343.0 L1178.2 344.3 L1179.1 345.7 L1180.0 347.0 L1180.9 348.3 L1181.8 349.7 L1182.7 351.0 L1183.6 352.4 L1184.5 353.7 L1185.4 355.1 L1186.3 356.5 L1187.2 357.8 L1188.1 359.2 L1189.0 360.5 L1190.0 361.8 L1190.9 363.2 L1191.8 364.5 L1192.7 365.9 L1193.6 367.2 L1194.5 368.5 L1195.4 369.9 L1196.3 371.3 L1197.2 372.8 L1198.1 374.3 L1199.0 375.8 L1199.9 377.3 L1200.8 378.8 L1201.7 380.3 L1202.6 381.9 L1203.5 383.5 L1204.4 385.0 L1205.3 386.6 L1206.2 388.1 L1207.1 389.7 L1208.0 391.2 L1208.9 392.7 L1209.8 394.2 L1210.8 395.7 L1211.7 397.1 L1212.6 398.5 L1213.5 399.9 L1214.4 401.3 L1215.3 402.6 L1216.2 403.8 L1217.1 405.0 L1218.0 406.2 L1218.9 407.3 L1219.8 408.3 L1220.7 409.3 L1221.6 410.2 L1222.5 411.0 L1223.4 411.8 L1224.3 412.5 L1225.2 413.2 L1226.1 413.9 L1227.0 414.6 L1227.9 415.3 L1228.8 415.9 L1229.7 416.5 L1230.7 417.1 L1231.6 417.7 L1232.5 418.3 L1233.4 418.8 L1234.3 419.4 L1235.2 419.9 L1236.1 420.4 L1237.0 420.9 L1237.9 421.4 L1238.8 421.9 L1239.7 422.4 L1240.6 422.9 L1241.5 423.3 L1242.4 423.8 L1243.3 424.2 L1244.2 424.7 L1245.1 425.1 L1246.0 425.5 L1246.9 425.9 L1247.8 426.4 L1248.7 426.8 L1249.6 427.2 L1250.5 427.6 L1251.5 428.0 L1252.4 428.5 L1253.3 428.9 L1254.2 429.3 L1255.1 429.7 L1256.0 430.1 L1256.9 430.5 L1257.8 431.0 L1258.7 431.4 L1259.6 431.8 L1260.5 432.2 L1261.4 432.7 L1262.3 433.1 L1263.2 433.5 L1264.1 433.9 L1265.0 434.3 L1265.9 434.7 L1266.8 435.1 L1267.7 435.5 L1268.6 435.9 L1269.5 436.3 L1270.4 436.7 L1271.4 437.1 L1272.3 437.5 L1273.2 437.9 L1274.1 438.3 L1275.0 438.7 L1275.9 439.1 L1276.8 439.5 L1277.7 439.9 L1278.6 440.2 L1279.5 440.6 L1280.4 441.0 L1281.3 441.4 L1282.2 441.7 L1283.1 442.1 L1284.0 442.5 L1284.9 442.8 L1285.8 443.2 L1286.7 443.6 L1287.6 443.9 L1288.5 444.3 L1289.4 444.6 L1290.3 445.0 L1291.2 445.3 L1292.2 445.6 L1293.1 446.0 L1294.0 446.3 L1294.9 446.6 L1295.8 447.0 L1296.7 447.3 L1297.6 447.6 L1298.5 447.9 L1299.4 448.2 L1300.3 448.5 L1301.2 448.9 L1302.1 449.2 L1303.0 449.5 L1303.9 449.8 L1304.8 450.0 L1305.7 450.3 L1306.6 450.6 L1307.5 450.9 L1308.4 451.2 L1309.3 451.5 L1310.2 451.7 L1311.1 452.0" stroke="#000000" stroke-width="1.2" stroke-dasharray="8,4"/>
<path d="M385.9 462.5 L386.8 462.5 L387.7 462.5 L388.6 462.5 L389.5 462.5 L390.4 462.5 L391.3 462.5 L392.2 462.5 L393.1 462.5 L394.0 457.6 L394.9 449.9 L395.9 460.6 L396.8 482.4 L397.7 485.9 L398.6 476.5 L399.5 452.5 L400.4 438.0 L401.3 452.5 L402.2 476.1 L403.1 494.0 L404.0 483.8 L404.9 458.1 L405.8 436.7 L406.7 442.1 L407.6 466.4 L408.5 487.1 L409.4 488.7 L410.3 465.8 L411.2 446.4 L412.1 436.8 L413.0 458.9 L413.9 479.2 L414.8 492.7 L415.8 477.2 L416.7 456.7 L417.6 443.5 L418.5 447.5 L419.4 470.0 L420.3 489.1 L421.2 490.3 L422.1 468.3 L423.0 447.5 L423.9 443.7 L424.8 451.1 L425.7 447.3 L426.6 444.7 L427.5 453.7 L428.4 478.8 L429.3 514.9 L430.2 536.6 L431.1 523.9 L432.0 473.5 L432.9 418.3 L433.8 380.1 L434.7 372.5 L435.6 397.2 L436.6 444.3 L437.5 497.2 L438.4 538.5 L439.3 555.6 L440.2 545.1 L441.1 509.6 L442.0 459.6 L442.9 409.1 L443.8 371.4 L444.7 355.7 L445.6 365.7 L446.5 398.3 L447.4 445.7 L448.3 496.9 L449.2 540.7 L450.1 568.2 L451.0 574.0 L451.9 557.3 L452.8 521.7 L453.7 474.2 L454.6 423.3 L455.5 378.0 L456.5 347.4 L457.4 335.3 L458.3 342.8 L459.2 367.8 L460.1 406.0 L461.0 451.2 L461.9 496.9 L462.8 537.0 L463.7 566.5 L464.6 582.1 L465.5 582.5 L466.4 568.4 L467.3 542.1 L468.2 507.0 L469.1 467.6 L470.0 428.2 L470.9 393.0 L471.8 365.2 L472.7 348.7 L473.6 343.5 L474.5 349.4 L475.4 365.2 L476.3 388.9 L477.3 417.8 L478.2 449.1 L479.1 480.1 L480.0 508.2 L480.9 532.5 L481.8 552.3 L482.7 565.4 L483.6 571.1 L484.5 569.1 L485.4 559.5 L486.3 543.1 L487.2 521.1 L488.1 495.0 L489.0 466.5 L489.9 437.3 L490.8 409.3 L491.7 383.9 L492.6 362.7 L493.5 346.8 L494.4 336.7 L495.3 333.1 L496.2 336.1 L497.2 345.6 L498.1 360.9 L499.0 381.3 L499.9 405.8 L500.8 433.2 L501.7 462.2 L502.6 491.6 L503.5 520.0 L504.4 546.4 L505.3 569.5 L506.2 588.6 L507.1 601.5 L508.0 609.0 L508.9 611.0 L509.8 607.5 L510.7 598.8 L511.6 585.3 L512.5 567.7 L513.4 546.7 L514.3 523.0 L515.2 497.4 L516.1 470.9 L517.0 444.3 L518.0 418.4 L518.9 394.0 L519.8 371.7 L520.7 352.0 L521.6 335.6 L522.5 322.8 L523.4 313.9 L524.3 308.9 L525.2 307.9 L526.1 310.9 L527.0 317.6 L527.9 327.9 L528.8 341.3 L529.7 357.4 L530.6 375.9 L531.5 396.2 L532.4 417.7 L533.3 440.1 L534.2 462.7 L535.1 485.1 L536.0 506.9 L536.9 527.4 L537.9 546.5 L538.8 563.7 L539.7 578.8 L540.6 591.5 L541.5 601.7 L542.4 609.3 L543.3 614.1 L544.2 615.8 L545.1 614.7 L546.0 611.1 L546.9 605.1 L547.8 596.9 L548.7 586.6 L549.6 574.5 L550.5 560.9 L551.4 546.0 L552.3 530.0 L553.2 513.3 L554.1 496.1 L555.0 478.7 L555.9 461.3 L556.8 444.1 L557.7 427.5 L558.7 411.5 L559.6 396.5 L560.5 382.5 L561.4 369.8 L562.3 358.3 L563.2 348.4 L564.1 340.0 L565.0 333.1 L565.9 327.9 L566.8 324.4 L567.7 322.5 L568.6 322.2 L569.5 322.3 L570.4 323.9 L571.3 327.1 L572.2 331.8 L573.1 337.9 L574.0 345.3 L574.9 354.0 L575.8 363.8 L576.7 374.7 L577.6 386.6 L578.6 399.2 L579.5 412.5 L580.4 426.3 L581.3 440.5 L582.2 455.0 L583.1 469.6 L584.0 484.2 L584.9 498.6 L585.8 512.8 L586.7 526.5 L587.6 539.7 L588.5 552.3 L589.4 564.1 L590.3 575.1 L591.2 585.2 L592.1 594.4 L593.0 602.6 L593.9 609.7 L594.8 615.7 L595.7 620.6 L596.6 624.3 L597.5 627.0 L598.4 628.5 L599.4 628.8 L600.3 628.0 L601.2 626.0 L602.1 623.0 L603.0 618.9 L603.9 613.8 L604.8 607.7 L605.7 600.6 L606.6 592.7 L607.5 584.0 L608.4 574.5 L609.3 564.4 L610.2 553.6 L611.1 542.4 L612.0 530.7 L612.9 518.7 L613.8 506.5 L614.7 494.0 L615.6 481.4 L616.5 468.8 L617.4 456.2 L618.3 439.8 L619.2 423.5 L620.2 407.7 L621.1 392.4 L622.0 377.7 L622.9 363.7 L623.8 350.5 L624.7 338.1 L625.6 326.7 L626.5 316.3 L627.4 306.9 L628.3 298.6 L629.2 291.2 L630.1 284.9 L631.0 279.7 L631.9 275.5 L632.8 272.2 L633.7 270.0 L634.6 269.3 L635.5 269.5 L636.4 270.6 L637.3 272.5 L638.2 275.2 L639.1 278.5 L640.1 282.5 L641.0 287.1 L641.9 292.2 L642.8 297.8 L643.7 303.8 L644.6 310.1 L645.5 316.8 L646.4 323.7 L647.3 330.8 L648.2 338.0 L649.1 345.3 L650.0 352.7 L650.9 360.2 L651.8 367.6 L652.7 375.1 L653.6 382.5 L654.5 389.8 L655.4 397.1 L656.3 404.4 L657.2 411.6 L658.1 418.7 L659.0 425.7 L659.9 432.7 L660.9 439.7 L661.8 446.6 L662.7 453.4 L663.6 460.3 L664.5 470.2 L665.4 480.0 L666.3 489.8 L667.2 499.4 L668.1 508.9 L669.0 518.2 L669.9 527.3 L670.8 536.2 L671.7 544.9 L672.6 553.3 L673.5 561.5 L674.4 569.3 L675.3 576.9 L676.2 584.2 L677.1 591.1 L678.0 597.7 L678.9 603.9 L679.8 609.7 L680.8 615.2 L681.7 620.3 L682.6 625.1 L683.5 629.5 L684.4 633.5 L685.3 637.1 L686.2 640.5 L687.1 643.4 L688.0 646.0 L688.9 648.3 L689.8 650.2 L690.7 651.8 L691.6 653.0 L692.5 653.9 L693.4 654.5 L694.3 654.7 L695.2 654.6 L696.1 654.0 L697.0 653.0 L697.9 651.6 L698.8 649.8 L699.7 647.7 L700.6 645.1 L701.6 642.2 L702.5 638.9 L703.4 635.2 L704.3 631.3 L705.2 627.1 L706.1 622.6 L707.0 617.8 L707.9 612.9 L708.8 607.7 L709.7 602.3 L710.6 596.7 L711.5 591.0 L712.4 585.0 L713.3 578.9 L714.2 572.7 L715.1 566.2 L716.0 559.7 L716.9 553.0 L717.8 546.1 L718.7 539.2 L719.6 532.2 L720.5 525.0 L721.5 517.9 L722.4 510.6 L723.3 503.4 L724.2 496.1 L725.1 488.9 L726.0 481.7 L726.9 474.5 L727.8 467.3 L728.7 460.2 L729.6 453.2 L730.5 446.2 L731.4 439.2 L732.3 432.3 L733.2 425.5 L734.1 418.7 L735.0 412.0 L735.9 405.3 L736.8 398.7 L737.7 392.2 L738.6 385.7 L739.5 379.3 L740.4 373.0 L741.3 366.7 L742.3 360.6 L743.2 354.6 L744.1 348.8 L745.0 343.1 L745.9 337.5 L746.8 332.1 L747.7 326.9 L748.6 321.9 L749.5 317.1 L750.4 312.4 L751.3 308.0 L752.2 303.8 L753.1 299.8 L754.0 296.0 L754.9 292.5 L755.8 289.2 L756.7 286.2 L757.6 283.4 L758.5 280.8 L759.4 278.5 L760.3 276.5 L761.2 274.6 L762.2 273.0 L763.1 271.5 L764.0 270.3 L764.9 269.1 L765.8 268.2 L766.7 267.3 L767.6 266.6 L768.5 266.1 L769.4 265.6 L770.3 265.3 L771.2 265.0 L772.1 264.8 L773.0 264.8 L773.9 265.0 L774.8 265.3 L775.7 265.8 L776.6 266.4 L777.5 267.2 L778.4 268.2 L779.3 269.3 L780.2 270.6 L781.1 272.0 L782.0 273.5 L783.0 275.2 L783.9 277.0 L784.8 278.8 L785.7 280.8 L786.6 282.9 L787.5 285.2 L788.4 287.5 L789.3 289.9 L790.2 292.5 L791.1 295.2 L792.0 298.0 L792.9 301.0 L793.8 304.1 L794.7 307.3 L795.6 310.7 L796.5 314.2 L797.4 317.8 L798.3 321.5 L799.2 325.4 L800.1 329.3 L801.0 333.3 L801.9 337.4 L802.9 341.6 L803.8 345.9 L804.7 350.2 L805.6 354.6 L806.5 359.1 L807.4 363.6 L808.3 368.2 L809.2 372.9 L810.1 377.6 L811.0 382.4 L811.9 387.3 L812.8 392.2 L813.7 397.2 L814.6 402.3 L815.5 407.4 L816.4 412.5 L817.3 417.7 L818.2 422.9 L819.1 428.0 L820.0 433.2 L820.9 438.3 L821.8 443.4 L822.7 448.4 L823.7 453.4 L824.6 458.3 L825.5 463.2 L826.4 468.6 L827.3 473.9 L828.2 479.1 L829.1 484.3 L830.0 489.5 L830.9 494.6 L831.8 499.6 L832.7 504.6 L833.6 509.6 L834.5 514.5 L835.4 519.3 L836.3 524.1 L837.2 528.8 L838.1 533.5 L839.0 538.1 L839.9 542.6 L840.8 547.1 L841.7 551.4 L842.6 555.7 L843.6 560.0 L844.5 564.1 L845.4 568.2 L846.3 572.3 L847.2 576.3 L848.1 580.2 L849.0 584.1 L849.9 587.9 L850.8 591.7 L851.7 595.5 L852.6 599.1 L853.5 602.8 L854.4 606.3 L855.3 609.8 L856.2 613.2 L857.1 616.6 L858.0 619.8 L858.9 623.0 L859.8 626.0 L860.7 629.0 L861.6 631.8 L862.5 634.6 L863.4 637.2 L864.4 639.7 L865.3 642.1 L866.2 644.3 L867.1 646.5 L868.0 648.5 L868.9 650.3 L869.8 652.1 L870.7 653.7 L871.6 655.1 L872.5 656.5 L873.4 657.7 L874.3 658.8 L875.2 659.8 L876.1 660.8 L877.0 661.6 L877.9 662.4 L878.8 663.1 L879.7 663.8 L880.6 664.5 L881.5 665.1 L882.4 665.7 L883.3 666.4 L884.3 667.0 L885.2 667.6 L886.1 668.2 L887.0 668.8 L887.9 669.4 L888.8 669.9 L889.7 670.3 L890.6 670.6 L891.5 670.8 L892.4 671.0 L893.3 671.0 L894.2 670.9 L895.1 670.7 L896.0 670.3 L896.9 669.8 L897.8 669.1 L898.7 668.3 L899.6 667.4 L900.5 666.4 L901.4 665.3 L902.3 664.0 L903.2 662.8 L904.1 661.5 L905.1 660.1 L906.0 658.8 L906.9 657.4 L907.8 656.0 L908.7 654.7 L909.6 653.3 L910.5 651.9 L911.4 650.5 L912.3 649.1 L913.2 647.6 L914.1 646.1 L915.0 644.6 L915.9 642.9 L916.8 641.2 L917.7 639.4 L918.6 637.5 L919.5 635.4 L920.4 633.3 L921.3 631.1 L922.2 628.8 L923.1 626.4 L924.0 623.9 L925.0 621.3 L925.9 618.7 L926.8 616.1 L927.7 613.5 L928.6 610.8 L929.5 608.2 L930.4 605.6 L931.3 603.1 L932.2 600.6 L933.1 598.1 L934.0 595.7 L934.9 593.4 L935.8 591.2 L936.7 589.1 L937.6 587.0 L938.5 585.0 L939.4 583.1 L940.3 581.3 L941.2 579.5 L942.1 577.7 L943.0 576.0 L943.9 574.2 L944.8 572.5 L945.8 570.7 L946.7 568.9 L947.6 567.0 L948.5 565.0 L949.4 563.0 L950.3 560.8 L951.2 558.6 L952.1 556.4 L953.0 554.0 L953.9 551.6 L954.8 549.2 L955.7 546.7 L956.6 544.2 L957.5 541.6 L958.4 539.1 L959.3 536.6 L960.2 534.0 L961.1 531.5 L962.0 529.0 L962.9 526.6 L963.8 524.2 L964.7 521.8 L965.7 519.5 L966.6 517.2 L967.5 514.9 L968.4 512.7 L969.3 510.5 L970.2 508.4 L971.1 506.2 L972.0 504.1 L972.9 502.0 L973.8 499.9 L974.7 497.7 L975.6 495.6 L976.5 493.5 L977.4 491.3 L978.3 489.1 L979.2 486.9 L980.1 484.7 L981.0 482.4 L981.9 480.2 L982.8 477.9 L983.7 475.7 L984.6 473.4 L985.5 471.2 L986.5 468.9 L987.4 466.7 L988.3 464.2 L989.2 461.7 L990.1 459.2 L991.0 456.7 L991.9 454.2 L992.8 451.6 L993.7 449.1 L994.6 446.5 L995.5 443.9 L996.4 441.3 L997.3 438.7 L998.2 436.0 L999.1 433.3 L1000.0 430.5 L1000.9 427.8 L1001.8 425.1 L1002.7 422.3 L1003.6 419.6 L1004.5 416.9 L1005.4 414.2 L1006.4 411.5 L1007.3 408.9 L1008.2 406.3 L1009.1 403.7 L1010.0 401.2 L1010.9 398.8 L1011.8 396.4 L1012.7 394.1 L1013.6 391.9 L1014.5 389.8 L1015.4 387.7 L1016.3 385.8 L1017.2 383.9 L1018.1 382.1 L1019.0 380.4 L1019.9 378.8 L1020.8 377.2 L1021.7 375.6 L1022.6 374.1 L1023.5 372.6 L1024.4 371.0 L1025.3 369.5 L1026.2 367.9 L1027.2 366.2 L1028.1 364.5 L1029.0 362.7 L1029.9 360.9 L1030.8 359.1 L1031.7 357.2 L1032.6 355.3 L1033.5 353.4 L1034.4 351.5 L1035.3 349.7 L1036.2 347.9 L1037.1 346.2 L1038.0 344.5 L1038.9 342.9 L1039.8 341.4 L1040.7 340.0 L1041.6 338.7 L1042.5 337.6 L1043.4 336.5 L1044.3 335.5 L1045.2 334.6 L1046.1 333.8 L1047.1 333.1 L1048.0 332.4 L1048.9 331.8 L1049.8 331.2 L1050.7 330.6 L1051.6 330.1 L1052.5 329.5 L1053.4 328.9 L1054.3 328.3 L1055.2 327.6 L1056.1 326.9 L1057.0 326.2 L1057.9 325.4 L1058.8 324.5 L1059.7 323.7 L1060.6 322.8 L1061.5 321.8 L1062.4 320.9 L1063.3 320.0 L1064.2 319.0 L1065.1 318.1 L1066.0 317.2 L1066.9 316.4 L1067.9 315.5 L1068.8 314.7 L1069.7 314.0 L1070.6 313.3 L1071.5 312.6 L1072.4 312.0 L1073.3 311.5 L1074.2 311.0 L1075.1 310.6 L1076.0 310.3 L1076.9 310.0 L1077.8 309.7 L1078.7 309.6 L1079.6 309.5 L1080.5 309.4 L1081.4 309.4 L1082.3 309.5 L1083.2 309.5 L1084.1 309.6 L1085.0 309.7 L1085.9 309.8 L1086.8 309.8 L1087.7 309.8 L1088.7 309.8 L1089.6 309.7 L1090.5 309.5 L1091.4 309.3 L1092.3 309.0 L1093.2 308.7 L1094.1 308.3 L1095.0 307.9 L1095.9 307.5 L1096.8 307.1 L1097.7 306.6 L1098.6 306.1 L1099.5 305.6 L1100.4 305.2 L1101.3 304.7 L1102.2 304.3 L1103.1 304.0 L1104.0 303.6 L1104.9 303.4 L1105.8 303.2 L1106.7 303.0 L1107.6 303.0 L1108.6 303.0 L1109.5 303.0 L1110.4 303.1 L1111.3 303.3 L1112.2 303.5 L1113.1 303.8 L1114.0 304.0 L1114.9 304.3 L1115.8 304.6 L1116.7 304.9 L1117.6 305.1 L1118.5 305.4 L1119.4 305.6 L1120.3 305.8 L1121.2 305.9 L1122.1 306.1 L1123.0 306.2 L1123.9 306.3 L1124.8 306.3 L1125.7 306.4 L1126.6 306.4 L1127.5 306.5 L1128.4 306.5 L1129.4 306.5 L1130.3 306.6 L1131.2 306.6 L1132.1 306.6 L1133.0 306.6 L1133.9 306.6 L1134.8 306.5 L1135.7 306.5 L1136.6 306.5 L1137.5 306.5 L1138.4 306.5 L1139.3 306.6 L1140.2 306.8 L1141.1 307.0 L1142.0 307.3 L1142.9 307.8 L1143.8 308.3 L1144.7 309.1 L1145.6 309.9 L1146.5 310.9 L1147.4 312.0 L1148.3 313.3 L1149.3 314.6 L1150.2 316.0 L1151.1 317.6 L1152.0 319.2 L1152.9 320.8 L1153.8 322.4 L1154.7 323.8 L1155.6 325.2 L1156.5 326.5 L1157.4 327.6 L1158.3 328.6 L1159.2 329.5 L1160.1 330.3 L1161.0 331.0 L1161.9 331.6 L1162.8 332.2 L1163.7 332.7 L1164.6 333.3 L1165.5 333.8 L1166.4 334.3 L1167.3 334.9 L1168.2 335.6 L1169.1 336.3 L1170.1 337.1 L1171.0 337.9 L1171.9 338.9 L1172.8 339.9 L1173.7 340.9 L1174.6 342.1 L1175.5 343.3 L1176.4 344.5 L1177.3 345.8 L1178.2 347.0 L1179.1 348.3 L1180.0 349.6 L1180.9 350.9 L1181.8 352.1 L1182.7 353.3 L1183.6 354.4 L1184.5 355.5 L1185.4 356.4 L1186.3 357.3 L1187.2 358.1 L1188.1 358.9 L1189.0 359.6 L1190.0 360.2 L1190.9 360.8 L1191.8 361.3 L1192.7 361.8 L1193.6 362.4 L1194.5 363.0 L1195.4 363.6 L1196.3 364.3 L1197.2 365.1 L1198.1 366.0 L1199.0 367.0 L1199.9 368.1 L1200.8 369.3 L1201.7 370.7 L1202.6 372.2 L1203.5 373.7 L1204.4 375.4 L1205.3 377.1 L1206.2 378.9 L1207.1 380.7 L1208.0 382.6 L1208.9 384.4 L1209.8 386.3 L1210.8 388.2 L1211.7 390.0 L1212.6 391.8 L1213.5 393.5 L1214.4 395.1 L1215.3 396.4 L1216.2 397.5 L1217.1 398.6 L1218.0 399.6 L1218.9 400.5 L1219.8 401.2 L1220.7 401.8 L1221.6 402.4 L1222.5 402.8 L1223.4 403.1 L1224.3 403.4 L1225.2 403.5 L1226.1 403.6 L1227.0 403.7 L1227.9 403.7 L1228.8 403.7 L1229.7 403.7 L1230.7 403.8 L1231.6 403.8 L1232.5 403.9 L1233.4 403.9 L1234.3 404.1 L1235.2 404.3 L1236.1 404.5 L1237.0 404.8 L1237.9 405.1 L1238.8 405.5 L1239.7 405.9 L1240.6 406.4 L1241.5 406.9 L1242.4 407.5 L1243.3 408.1 L1244.2 408.8 L1245.1 409.5 L1246.0 410.4 L1246.9 411.2 L1247.8 412.3 L1248.7 413.5 L1249.6 414.7 L1250.5 415.9 L1251.5 417.3 L1252.4 418.6 L1253.3 420.0 L1254.2 421.4 L1255.1 422.8 L1256.0 424.2 L1256.9 425.6 L1257.8 427.0 L1258.7 428.3 L1259.6 429.5 L1260.5 430.8 L1261.4 432.0 L1262.3 433.2 L1263.2 434.3 L1264.1 435.5 L1265.0 436.6 L1265.9 437.7 L1266.8 438.8 L1267.7 439.9 L1268.6 441.1 L1269.5 442.2 L1270.4 443.3 L1271.4 444.3 L1272.3 445.3 L1273.2 446.3 L1274.1 447.2 L1275.0 448.0 L1275.9 448.8 L1276.8 449.4 L1277.7 449.9 L1278.6 450.4 L1279.5 450.7 L1280.4 451.0 L1281.3 451.1 L1282.2 451.2 L1283.1 451.2 L1284.0 451.2 L1284.9 451.2 L1285.8 451.2 L1286.7 451.2 L1287.6 451.2 L1288.5 451.3 L1289.4 451.4 L1290.3 451.5 L1291.2 451.7 L1292.2 452.0 L1293.1 452.2 L1294.0 452.5 L1294.9 452.8 L1295.8 453.1 L1296.7 453.4 L1297.6 453.6 L1298.5 453.7 L1299.4 453.8 L1300.3 453.8 L1301.2 453.8 L1302.1 453.6 L1303.0 453.4 L1303.9 453.1 L1304.8 452.7 L1305.7 452.4 L1306.6 451.9 L1307.5 451.5 L1308.4 451.1 L1309.3 450.7 L1310.2 450.3 L1311.1 450.0" stroke="#D95319" stroke-width="1"/>
<path d="M385.9 462.5 L386.8 462.5 L387.7 462.5 L388.6 462.5 L389.5 462.5 L390.4 462.5 L391.3 462.5 L392.2 462.5 L393.1 462.5 L394.0 449.5 L394.9 430.2 L395.9 451.8 L396.8 500.3 L397.7 508.0 L398.6 487.2 L399.5 433.7 L400.4 401.6 L401.3 433.7 L402.2 486.2 L403.1 526.1 L404.0 503.4 L404.9 446.2 L405.8 398.7 L406.7 410.7 L407.6 464.8 L408.5 510.7 L409.4 514.3 L410.3 463.3 L411.2 420.1 L412.1 398.9 L413.0 448.1 L413.9 493.1 L414.8 523.2 L415.8 488.7 L416.7 443.1 L417.6 413.7 L418.5 422.7 L419.4 472.6 L420.3 515.1 L421.2 517.7 L422.1 468.8 L423.0 422.7 L423.9 412.2 L424.8 443.2 L425.7 456.2 L426.6 459.4 L427.5 461.6 L428.4 476.3 L429.3 512.5 L430.2 540.2 L431.1 532.8 L432.0 481.2 L432.9 423.6 L433.8 383.1 L434.7 375.2 L435.6 400.5 L436.6 451.1 L437.5 509.2 L438.4 555.3 L439.3 574.6 L440.2 562.4 L441.1 520.7 L442.0 462.3 L442.9 403.4 L443.8 360.3 L444.7 342.6 L445.6 354.4 L446.5 392.1 L447.4 446.7 L448.3 505.6 L449.2 556.0 L450.1 587.6 L451.0 594.2 L451.9 575.1 L452.8 534.3 L453.7 479.7 L454.6 421.4 L455.5 369.5 L456.5 334.3 L457.4 320.3 L458.3 328.7 L459.2 357.1 L460.1 400.4 L461.0 451.9 L461.9 503.9 L462.8 549.5 L463.7 583.0 L464.6 600.7 L465.5 601.0 L466.4 584.8 L467.3 554.7 L468.2 514.8 L469.1 469.8 L470.0 424.9 L470.9 384.7 L471.8 353.2 L472.7 334.2 L473.6 328.3 L474.5 335.0 L475.4 353.0 L476.3 383.1 L477.3 419.3 L478.2 458.2 L479.1 496.7 L480.0 532.0 L480.9 562.9 L481.8 588.8 L482.7 607.2 L483.6 617.1 L484.5 611.3 L485.4 597.1 L486.3 575.1 L487.2 546.8 L488.1 513.8 L489.0 478.0 L489.9 441.5 L490.8 406.2 L491.7 373.9 L492.6 350.1 L493.5 332.2 L494.4 320.9 L495.3 317.0 L496.2 320.5 L497.2 331.2 L498.1 348.6 L499.0 371.6 L499.9 399.3 L500.8 430.0 L501.7 462.5 L502.6 495.4 L503.5 527.2 L504.4 556.7 L505.3 582.5 L506.2 603.8 L507.1 618.2 L508.0 626.5 L508.9 626.9 L509.8 621.3 L510.7 609.8 L511.6 593.0 L512.5 571.7 L513.4 546.5 L514.3 518.4 L515.2 488.4 L516.1 457.4 L517.0 429.4 L518.0 402.3 L518.9 377.0 L519.8 354.1 L520.7 334.3 L521.6 318.1 L522.5 306.0 L523.4 298.1 L524.3 294.7 L525.2 294.2 L526.1 298.1 L527.0 306.1 L527.9 317.9 L528.8 333.0 L529.7 351.2 L530.6 371.7 L531.5 394.2 L532.4 418.0 L533.3 441.4 L534.2 465.1 L535.1 488.4 L536.0 510.9 L536.9 532.2 L537.9 551.7 L538.8 569.3 L539.7 584.4 L540.6 597.0 L541.5 608.9 L542.4 618.0 L543.3 624.0 L544.2 626.5 L545.1 626.0 L546.0 622.7 L546.9 616.7 L547.8 608.3 L548.7 597.6 L549.6 583.9 L550.5 568.5 L551.4 551.7 L552.3 533.8 L553.2 515.1 L554.1 496.0 L555.0 476.6 L555.9 457.4 L556.8 438.5 L557.7 421.1 L558.7 404.5 L559.6 389.0 L560.5 374.8 L561.4 361.9 L562.3 350.6 L563.2 340.9 L564.1 333.0 L565.0 326.8 L565.9 320.8 L566.8 316.5 L567.7 314.1 L568.6 313.4 L569.5 313.0 L570.4 314.3 L571.3 317.2 L572.2 321.7 L573.1 327.7 L574.0 335.9 L574.9 345.4 L575.8 356.1 L576.7 367.9 L577.6 380.6 L578.6 394.0 L579.5 408.2 L580.4 422.9 L581.3 437.9 L582.2 453.3 L583.1 468.7 L584.0 484.1 L584.9 499.3 L585.8 514.2 L586.7 528.8 L587.6 542.8 L588.5 556.1 L589.4 568.8 L590.3 580.6 L591.2 591.6 L592.1 601.6 L593.0 610.5 L593.9 618.4 L594.8 625.1 L595.7 630.7 L596.6 635.0 L597.5 638.2 L598.4 640.2 L599.4 640.9 L600.3 640.5 L601.2 638.9 L602.1 636.1 L603.0 632.2 L603.9 627.2 L604.8 621.1 L605.7 614.1 L606.6 604.9 L607.5 594.8 L608.4 583.9 L609.3 572.2 L610.2 559.9 L611.1 547.0 L612.0 533.5 L612.9 519.6 L613.8 505.3 L614.7 493.2 L615.6 481.0 L616.5 468.6 L617.4 456.1 L618.3 439.5 L619.2 423.0 L620.2 406.9 L621.1 391.3 L622.0 376.4 L622.9 359.6 L623.8 343.7 L624.7 328.8 L625.6 314.9 L626.5 302.1 L627.4 290.5 L628.3 280.1 L629.2 270.9 L630.1 262.8 L631.0 258.7 L631.9 255.8 L632.8 253.9 L633.7 253.2 L634.6 254.1 L635.5 256.1 L636.4 258.9 L637.3 262.6 L638.2 267.0 L639.1 270.8 L640.1 275.2 L641.0 280.2 L641.9 285.7 L642.8 291.6 L643.7 297.8 L644.6 304.4 L645.5 311.3 L646.4 318.3 L647.3 327.8 L648.2 337.5 L649.1 347.2 L650.0 357.0 L650.9 366.9 L651.8 376.7 L652.7 386.6 L653.6 396.5 L654.5 406.4 L655.4 411.8 L656.3 417.1 L657.2 422.4 L658.1 427.7 L659.0 432.9 L659.9 438.1 L660.9 443.2 L661.8 448.2 L662.7 453.2 L663.6 460.8 L664.5 471.6 L665.4 482.2 L666.3 492.7 L667.2 503.0 L668.1 513.2 L669.0 523.2 L669.9 532.9 L670.8 542.4 L671.7 550.8 L672.6 559.0 L673.5 566.8 L674.4 574.4 L675.3 581.6 L676.2 588.6 L677.1 595.3 L678.0 601.6 L678.9 607.6 L679.8 613.6 L680.8 619.3 L681.7 624.5 L682.6 629.4 L683.5 633.9 L684.4 638.0 L685.3 641.6 L686.2 644.9 L687.1 647.8 L688.0 650.1 L688.9 652.0 L689.8 653.5 L690.7 654.7 L691.6 655.4 L692.5 655.7 L693.4 655.8 L694.3 655.5 L695.2 654.8 L696.1 654.0 L697.0 652.9 L697.9 651.5 L698.8 649.7 L699.7 647.5 L700.6 645.1 L701.6 642.3 L702.5 639.2 L703.4 635.8 L704.3 631.3 L705.2 626.5 L706.1 621.5 L707.0 616.2 L707.9 610.7 L708.8 604.9 L709.7 598.9 L710.6 592.8 L711.5 586.4 L712.4 582.0 L713.3 577.5 L714.2 572.8 L715.1 567.9 L716.0 562.9 L716.9 557.8 L717.8 552.5 L718.7 547.1 L719.6 541.6 L720.5 533.7 L721.5 525.7 L722.4 517.6 L723.3 509.5 L724.2 501.4 L725.1 493.3 L726.0 485.1 L726.9 477.0 L727.8 468.9 L728.7 461.6 L729.6 454.4 L730.5 447.2 L731.4 440.1 L732.3 433.0 L733.2 426.0 L734.1 419.1 L735.0 412.3 L735.9 405.5 L736.8 398.8 L737.7 392.3 L738.6 385.8 L739.5 379.5 L740.4 373.3 L741.3 367.2 L742.3 361.3 L743.2 355.5 L744.1 349.8 L745.0 344.3 L745.9 339.0 L746.8 333.8 L747.7 328.7 L748.6 323.9 L749.5 319.2 L750.4 314.7 L751.3 310.3 L752.2 306.1 L753.1 302.7 L754.0 299.4 L754.9 296.4 L755.8 293.5 L756.7 290.7 L757.6 288.2 L758.5 285.9 L759.4 283.7 L760.3 281.7 L761.2 281.5 L762.2 281.4 L763.1 281.5 L764.0 281.8 L764.9 282.3 L765.8 282.9 L766.7 283.7 L767.6 284.7 L768.5 285.9 L769.4 282.7 L770.3 279.7 L771.2 276.8 L772.1 274.2 L773.0 271.7 L773.9 269.4 L774.8 267.3 L775.7 265.4 L776.6 263.7 L777.5 264.6 L778.4 265.6 L779.3 266.8 L780.2 268.2 L781.1 269.7 L782.0 271.4 L783.0 273.2 L783.9 275.2 L784.8 277.3 L785.7 279.5 L786.6 281.9 L787.5 284.4 L788.4 287.0 L789.3 289.8 L790.2 292.7 L791.1 295.7 L792.0 298.8 L792.9 302.0 L793.8 305.3 L794.7 308.7 L795.6 312.3 L796.5 315.9 L797.4 319.6 L798.3 323.4 L799.2 327.3 L800.1 331.2 L801.0 335.3 L801.9 338.3 L802.9 341.3 L803.8 344.5 L804.7 347.7 L805.6 351.0 L806.5 354.3 L807.4 357.7 L808.3 361.2 L809.2 364.7 L810.1 370.4 L811.0 376.2 L811.9 382.0 L812.8 387.8 L813.7 393.6 L814.6 399.5 L815.5 405.3 L816.4 411.2 L817.3 417.1 L818.2 420.6 L819.1 424.1 L820.0 427.7 L820.9 431.2 L821.8 434.8 L822.7 438.4 L823.7 442.0 L824.6 445.5 L825.5 449.1 L826.4 454.2 L827.3 459.2 L828.2 464.2 L829.1 469.1 L830.0 474.1 L830.9 479.0 L831.8 483.8 L832.7 488.7 L833.6 493.5 L834.5 500.2 L835.4 506.9 L836.3 513.4 L837.2 520.0 L838.1 526.4 L839.0 532.8 L839.9 539.1 L840.8 545.3 L841.7 551.4 L842.6 555.9 L843.6 560.4 L844.5 564.7 L845.4 569.0 L846.3 573.2 L847.2 577.3 L848.1 581.3 L849.0 585.3 L849.9 589.1 L850.8 592.9 L851.7 596.6 L852.6 600.2 L853.5 603.7 L854.4 607.1 L855.3 610.4 L856.2 613.7 L857.1 616.8 L858.0 619.9 L858.9 620.6 L859.8 621.3 L860.7 621.9 L861.6 622.4 L862.5 622.8 L863.4 623.1 L864.4 623.3 L865.3 623.4 L866.2 623.5 L867.1 627.8 L868.0 632.0 L868.9 636.1 L869.8 640.1 L870.7 644.1 L871.6 647.9 L872.5 651.6 L873.4 655.3 L874.3 658.9 L875.2 660.2 L876.1 661.4 L877.0 662.5 L877.9 663.5 L878.8 664.5 L879.7 665.3 L880.6 666.1 L881.5 666.8 L882.4 667.4 L883.3 668.0 L884.3 668.4 L885.2 668.8 L886.1 669.1 L887.0 669.3 L887.9 669.4 L888.8 669.4 L889.7 669.3 L890.6 669.2 L891.5 668.9 L892.4 668.6 L893.3 668.3 L894.2 667.8 L895.1 667.3 L896.0 666.7 L896.9 666.1 L897.8 665.4 L898.7 664.7 L899.6 665.3 L900.5 666.0 L901.4 666.5 L902.3 667.1 L903.2 667.5 L904.1 667.9 L905.1 668.3 L906.0 668.6 L906.9 668.8 L907.8 666.9 L908.7 664.9 L909.6 662.9 L910.5 660.8 L911.4 658.7 L912.3 656.6 L913.2 654.4 L914.1 652.1 L915.0 649.9 L915.9 647.4 L916.8 644.8 L917.7 642.2 L918.6 639.6 L919.5 637.0 L920.4 634.3 L921.3 631.6 L922.2 628.9 L923.1 626.1 L924.0 624.2 L925.0 622.2 L925.9 620.2 L926.8 618.2 L927.7 616.1 L928.6 614.1 L929.5 612.0 L930.4 609.9 L931.3 607.8 L932.2 607.1 L933.1 606.4 L934.0 605.7 L934.9 605.0 L935.8 604.3 L936.7 603.5 L937.6 602.7 L938.5 602.0 L939.4 601.2 L940.3 599.2 L941.2 597.3 L942.1 595.3 L943.0 593.3 L943.9 591.3 L944.8 589.3 L945.8 587.3 L946.7 585.3 L947.6 583.3 L948.5 579.2 L949.4 575.0 L950.3 570.8 L951.2 566.6 L952.1 562.5 L953.0 558.3 L953.9 554.1 L954.8 549.9 L955.7 545.7 L956.6 543.4 L957.5 541.0 L958.4 538.6 L959.3 536.2 L960.2 533.8 L961.1 531.4 L962.0 529.0 L962.9 526.7 L963.8 524.3 L964.7 521.9 L965.7 519.5 L966.6 517.1 L967.5 514.8 L968.4 512.4 L969.3 510.0 L970.2 507.7 L971.1 505.3 L972.0 503.0 L972.9 500.6 L973.8 498.3 L974.7 496.0 L975.6 493.6 L976.5 491.3 L977.4 489.0 L978.3 486.7 L979.2 484.4 L980.1 482.1 L981.0 479.8 L981.9 477.5 L982.8 475.3 L983.7 473.0 L984.6 470.7 L985.5 468.5 L986.5 466.3 L987.4 464.0 L988.3 461.5 L989.2 458.7 L990.1 456.0 L991.0 453.3 L991.9 450.6 L992.8 447.9 L993.7 445.2 L994.6 442.6 L995.5 439.9 L996.4 437.3 L997.3 435.1 L998.2 433.0 L999.1 430.8 L1000.0 428.7 L1000.9 426.6 L1001.8 424.5 L1002.7 422.4 L1003.6 420.4 L1004.5 418.3 L1005.4 417.1 L1006.4 415.9 L1007.3 414.8 L1008.2 413.6 L1009.1 412.5 L1010.0 411.4 L1010.9 410.3 L1011.8 409.2 L1012.7 408.2 L1013.6 406.2 L1014.5 404.2 L1015.4 402.3 L1016.3 400.3 L1017.2 398.4 L1018.1 396.5 L1019.0 394.7 L1019.9 392.8 L1020.8 391.0 L1021.7 388.0 L1022.6 385.0 L1023.5 382.1 L1024.4 379.1 L1025.3 376.2 L1026.2 373.3 L1027.2 370.5 L1028.1 367.6 L1029.0 364.8 L1029.9 362.5 L1030.8 360.2 L1031.7 358.0 L1032.6 355.7 L1033.5 353.5 L1034.4 351.3 L1035.3 349.1 L1036.2 347.0 L1037.1 344.9 L1038.0 343.3 L1038.9 341.8 L1039.8 340.3 L1040.7 338.9 L1041.6 337.5 L1042.5 336.0 L1043.4 334.6 L1044.3 333.3 L1045.2 331.9 L1046.1 330.8 L1047.1 329.7 L1048.0 328.6 L1048.9 327.5 L1049.8 326.5 L1050.7 325.5 L1051.6 324.5 L1052.5 323.5 L1053.4 322.6 L1054.3 322.1 L1055.2 321.6 L1056.1 321.1 L1057.0 320.7 L1057.9 320.3 L1058.8 319.9 L1059.7 319.6 L1060.6 319.2 L1061.5 318.9 L1062.4 317.3 L1063.3 315.7 L1064.2 314.2 L1065.1 312.6 L1066.0 311.1 L1066.9 309.6 L1067.9 308.1 L1068.8 306.7 L1069.7 305.3 L1070.6 305.4 L1071.5 305.5 L1072.4 305.7 L1073.3 305.8 L1074.2 306.0 L1075.1 306.3 L1076.0 306.5 L1076.9 306.8 L1077.8 307.1 L1078.7 306.6 L1079.6 306.2 L1080.5 305.8 L1081.4 305.4 L1082.3 305.0 L1083.2 304.6 L1084.1 304.3 L1085.0 304.0 L1085.9 303.7 L1086.8 303.4 L1087.7 303.2 L1088.7 302.9 L1089.6 302.7 L1090.5 302.5 L1091.4 302.3 L1092.3 302.2 L1093.2 302.1 L1094.1 301.9 L1095.0 301.3 L1095.9 300.6 L1096.8 300.0 L1097.7 299.4 L1098.6 298.7 L1099.5 298.1 L1100.4 297.5 L1101.3 296.9 L1102.2 296.3 L1103.1 296.8 L1104.0 297.4 L1104.9 298.0 L1105.8 298.6 L1106.7 299.2 L1107.6 299.8 L1108.6 300.5 L1109.5 301.1 L1110.4 301.8 L1111.3 301.9 L1112.2 302.1 L1113.1 302.2 L1114.0 302.4 L1114.9 302.6 L1115.8 302.8 L1116.7 303.1 L1117.6 303.3 L1118.5 303.6 L1119.4 304.2 L1120.3 304.9 L1121.2 305.6 L1122.1 306.4 L1123.0 307.1 L1123.9 307.9 L1124.8 308.6 L1125.7 309.4 L1126.6 310.2 L1127.5 310.4 L1128.4 310.6 L1129.4 310.8 L1130.3 311.1 L1131.2 311.3 L1132.1 311.6 L1133.0 311.9 L1133.9 312.2 L1134.8 312.5 L1135.7 312.5 L1136.6 312.6 L1137.5 312.6 L1138.4 312.7 L1139.3 312.8 L1140.2 312.9 L1141.1 313.0 L1142.0 313.1 L1142.9 313.2 L1143.8 314.1 L1144.7 315.0 L1145.6 315.8 L1146.5 316.7 L1147.4 317.6 L1148.3 318.6 L1149.3 319.5 L1150.2 320.4 L1151.1 321.5 L1152.0 323.7 L1152.9 325.9 L1153.8 328.0 L1154.7 330.2 L1155.6 332.4 L1156.5 334.7 L1157.4 336.9 L1158.3 339.1 L1159.2 341.3 L1160.1 340.0 L1161.0 338.6 L1161.9 337.3 L1162.8 336.0 L1163.7 334.6 L1164.6 333.3 L1165.5 332.0 L1166.4 330.7 L1167.3 329.4 L1168.2 331.2 L1169.1 333.0 L1170.1 334.8 L1171.0 336.6 L1171.9 338.4 L1172.8 340.3 L1173.7 342.1 L1174.6 343.9 L1175.5 345.7 L1176.4 347.5 L1177.3 349.3 L1178.2 351.0 L1179.1 352.8 L1180.0 354.6 L1180.9 356.4 L1181.8 358.2 L1182.7 360.0 L1183.6 361.8 L1184.5 362.3 L1185.4 362.9 L1186.3 363.5 L1187.2 364.0 L1188.1 364.6 L1189.0 365.2 L1190.0 365.7 L1190.9 366.3 L1191.8 366.9 L1192.7 369.7 L1193.6 372.5 L1194.5 375.3 L1195.4 378.1 L1196.3 380.9 L1197.2 383.7 L1198.1 386.4 L1199.0 389.2 L1199.9 392.0 L1200.8 391.6 L1201.7 391.2 L1202.6 390.8 L1203.5 390.4 L1204.4 390.0 L1205.3 389.6 L1206.2 389.2 L1207.1 388.8 L1208.0 388.4 L1208.9 388.8 L1209.8 389.2 L1210.8 389.7 L1211.7 390.1 L1212.6 390.5 L1213.5 390.9 L1214.4 391.3 L1215.3 391.4 L1216.2 391.5 L1217.1 392.8 L1218.0 394.2 L1218.9 395.6 L1219.8 396.9 L1220.7 398.3 L1221.6 399.7 L1222.5 401.1 L1223.4 402.4 L1224.3 403.8 L1225.2 403.9 L1226.1 404.0 L1227.0 404.1 L1227.9 404.2 L1228.8 404.3 L1229.7 404.4 L1230.7 404.5 L1231.6 404.6 L1232.5 404.8 L1233.4 405.5 L1234.3 406.3 L1235.2 407.1 L1236.1 407.8 L1237.0 408.6 L1237.9 409.4 L1238.8 410.2 L1239.7 411.0 L1240.6 411.7 L1241.5 412.5 L1242.4 413.3 L1243.3 414.1 L1244.2 414.9 L1245.1 415.7 L1246.0 416.5 L1246.9 417.3 L1247.8 418.2 L1248.7 419.1 L1249.6 420.0 L1250.5 420.9 L1251.5 421.8 L1252.4 422.7 L1253.3 423.6 L1254.2 424.5 L1255.1 425.3 L1256.0 426.2 L1256.9 427.0 L1257.8 427.9 L1258.7 428.7 L1259.6 429.6 L1260.5 430.4 L1261.4 431.2 L1262.3 432.0 L1263.2 432.8 L1264.1 433.5 L1265.0 434.3 L1265.9 435.2 L1266.8 436.1 L1267.7 437.0 L1268.6 437.9 L1269.5 438.8 L1270.4 439.7 L1271.4 440.5 L1272.3 441.4 L1273.2 442.2 L1274.1 442.1 L1275.0 441.9 L1275.9 441.7 L1276.8 441.6 L1277.7 441.4 L1278.6 441.2 L1279.5 440.9 L1280.4 440.7 L1281.3 440.4 L1282.2 439.5 L1283.1 438.5 L1284.0 437.6 L1284.9 436.6 L1285.8 435.6 L1286.7 434.5 L1287.6 433.5 L1288.5 432.4 L1289.4 431.4 L1290.3 433.9 L1291.2 436.4 L1292.2 438.8 L1293.1 441.3 L1294.0 443.7 L1294.9 446.2 L1295.8 448.6 L1296.7 451.0 L1297.6 453.3 L1298.5 453.1 L1299.4 452.9 L1300.3 452.7 L1301.2 452.5 L1302.1 452.2 L1303.0 451.9 L1303.9 451.6 L1304.8 451.3 L1305.7 450.9 L1306.6 450.9 L1307.5 450.8 L1308.4 450.6 L1309.3 450.4 L1310.2 450.2 L1311.1 450.0" stroke="#EDB120" stroke-width="1"/>
<path d="M385.9 462.5 L386.8 462.5 L387.7 462.5 L388.6 462.5 L389.5 462.5 L390.4 462.5 L391.3 462.5 L392.2 462.5 L393.1 462.5 L394.0 457.8 L394.9 450.1 L395.9 461.8 L396.8 484.8 L397.7 488.5 L398.6 478.6 L399.5 453.2 L400.4 438.0 L401.3 453.2 L402.2 478.1 L403.1 497.1 L404.0 486.3 L404.9 459.2 L405.8 436.6 L406.7 442.3 L407.6 468.0 L408.5 489.8 L409.4 491.5 L410.3 467.3 L411.2 446.8 L412.1 436.7 L413.0 460.0 L413.9 481.4 L414.8 495.7 L415.8 479.3 L416.7 457.7 L417.6 443.7 L418.5 448.0 L419.4 471.7 L420.3 491.9 L421.2 493.1 L422.1 469.9 L423.0 448.0 L423.9 443.4 L424.8 451.5 L425.7 448.1 L426.6 445.5 L427.5 453.8 L428.4 478.1 L429.3 513.9 L430.2 535.5 L431.1 522.9 L432.0 472.6 L432.9 417.7 L433.8 379.7 L434.7 372.3 L435.6 397.1 L436.6 444.4 L437.5 497.5 L438.4 539.1 L439.3 556.5 L440.2 546.2 L441.1 511.0 L442.0 461.3 L442.9 411.2 L443.8 373.8 L444.7 358.5 L445.6 368.8 L446.5 401.8 L447.4 449.5 L448.3 501.0 L449.2 545.1 L450.1 572.7 L451.0 578.6 L451.9 562.0 L452.8 526.5 L453.7 478.9 L454.6 427.9 L455.5 382.5 L456.5 351.7 L457.4 339.4 L458.3 346.6 L459.2 371.4 L460.1 409.3 L461.0 454.3 L461.9 499.8 L462.8 539.7 L463.7 569.0 L464.6 584.4 L465.5 584.7 L466.4 570.4 L467.3 544.0 L468.2 508.8 L469.1 469.3 L470.0 429.7 L470.9 394.3 L471.8 366.5 L472.7 349.8 L473.6 344.4 L474.5 350.3 L475.4 366.0 L476.3 389.6 L477.3 418.5 L478.2 449.8 L479.1 480.8 L480.0 509.0 L480.9 533.4 L481.8 553.3 L482.7 566.6 L483.6 572.5 L484.5 570.6 L485.4 561.1 L486.3 544.9 L487.2 523.0 L488.1 497.0 L489.0 468.4 L489.9 439.2 L490.8 411.1 L491.7 385.6 L492.6 364.2 L493.5 348.1 L494.4 337.7 L495.3 333.9 L496.2 336.7 L497.2 345.9 L498.1 361.0 L499.0 381.1 L499.9 405.4 L500.8 432.6 L501.7 461.4 L502.6 490.6 L503.5 518.8 L504.4 545.0 L505.3 568.0 L506.2 586.9 L507.1 599.7 L508.0 607.0 L508.9 608.8 L509.8 605.1 L510.7 596.2 L511.6 582.6 L512.5 564.9 L513.4 543.8 L514.3 520.2 L515.2 494.7 L516.1 468.4 L517.0 442.0 L518.0 416.5 L518.9 392.4 L519.8 370.6 L520.7 351.6 L521.6 335.7 L522.5 323.5 L523.4 315.2 L524.3 310.7 L525.2 310.3 L526.1 313.7 L527.0 320.8 L527.9 331.3 L528.8 344.8 L529.7 361.0 L530.6 379.4 L531.5 399.5 L532.4 420.9 L533.3 442.9 L534.2 465.2 L535.1 487.2 L536.0 508.5 L536.9 528.6 L537.9 547.2 L538.8 564.0 L539.7 578.7 L540.6 591.0 L541.5 600.9 L542.4 608.1 L543.3 612.6 L544.2 613.9 L545.1 612.5 L546.0 608.7 L546.9 602.4 L547.8 593.9 L548.7 583.4 L549.6 571.1 L550.5 557.3 L551.4 542.3 L552.3 526.3 L553.2 509.6 L554.1 492.4 L555.0 475.1 L555.9 457.9 L556.8 440.9 L557.7 424.6 L558.7 409.0 L559.6 394.4 L560.5 380.8 L561.4 368.5 L562.3 357.6 L563.2 348.2 L564.1 340.3 L565.0 334.0 L565.9 329.3 L566.8 326.2 L567.7 324.7 L568.6 324.8 L569.5 325.1 L570.4 327.0 L571.3 330.3 L572.2 335.0 L573.1 341.1 L574.0 348.4 L574.9 356.9 L575.8 366.5 L576.7 377.0 L577.6 388.4 L578.6 400.5 L579.5 413.3 L580.4 426.5 L581.3 440.2 L582.2 454.0 L583.1 468.0 L584.0 482.0 L584.9 495.8 L585.8 509.4 L586.7 522.7 L587.6 535.5 L588.5 547.8 L589.4 559.4 L590.3 570.3 L591.2 580.4 L592.1 589.6 L593.0 597.9 L593.9 605.2 L594.8 611.5 L595.7 616.8 L596.6 621.0 L597.5 624.0 L598.4 626.0 L599.4 626.8 L600.3 626.6 L601.2 625.2 L602.1 622.8 L603.0 619.4 L603.9 615.0 L604.8 609.6 L605.7 603.3 L606.6 596.1 L607.5 588.1 L608.4 579.3 L609.3 569.9 L610.2 559.8 L611.1 549.2 L612.0 538.0 L612.9 526.4 L613.8 514.5 L614.7 502.2 L615.6 489.7 L616.5 477.1 L617.4 464.3 L618.3 447.7 L619.2 431.1 L620.2 414.9 L621.1 399.1 L622.0 383.9 L622.9 369.4 L623.8 355.6 L624.7 342.8 L625.6 330.9 L626.5 320.0 L627.4 310.2 L628.3 301.5 L629.2 293.9 L630.1 287.4 L631.0 282.0 L631.9 277.7 L632.8 274.4 L633.7 272.2 L634.6 271.6 L635.5 271.9 L636.4 273.0 L637.3 275.0 L638.2 277.6 L639.1 281.0 L640.1 285.0 L641.0 289.4 L641.9 294.4 L642.8 299.8 L643.7 305.6 L644.6 311.7 L645.5 318.1 L646.4 324.7 L647.3 331.4 L648.2 338.4 L649.1 345.5 L650.0 352.6 L650.9 359.9 L651.8 367.2 L652.7 374.5 L653.6 381.9 L654.5 389.2 L655.4 396.6 L656.3 403.9 L657.2 411.3 L658.1 418.6 L659.0 425.8 L659.9 433.1 L660.9 440.3 L661.8 447.5 L662.7 454.6 L663.6 461.8 L664.5 472.0 L665.4 482.1 L666.3 492.2 L667.2 502.1 L668.1 511.9 L669.0 521.5 L669.9 530.9 L670.8 540.0 L671.7 549.0 L672.6 557.6 L673.5 566.0 L674.4 574.1 L675.3 581.9 L676.2 589.3 L677.1 596.4 L678.0 603.2 L678.9 609.5 L679.8 615.5 L680.8 621.1 L681.7 626.3 L682.6 631.2 L683.5 635.6 L684.4 639.6 L685.3 643.1 L686.2 646.3 L687.1 649.1 L688.0 651.4 L688.9 653.3 L689.8 654.8 L690.7 655.9 L691.6 656.6 L692.5 656.9 L693.4 657.0 L694.3 656.7 L695.2 655.9 L696.1 654.9 L697.0 653.4 L697.9 651.7 L698.8 649.6 L699.7 647.1 L700.6 644.4 L701.6 641.3 L702.5 638.0 L703.4 634.3 L704.3 630.4 L705.2 626.2 L706.1 621.8 L707.0 617.2 L707.9 612.3 L708.8 607.2 L709.7 601.9 L710.6 596.4 L711.5 590.7 L712.4 584.9 L713.3 578.9 L714.2 572.7 L715.1 566.4 L716.0 560.0 L716.9 553.4 L717.8 546.7 L718.7 540.0 L719.6 533.1 L720.5 526.2 L721.5 519.1 L722.4 512.0 L723.3 504.9 L724.2 497.7 L725.1 490.5 L726.0 483.3 L726.9 476.1 L727.8 468.8 L728.7 461.6 L729.6 454.4 L730.5 447.2 L731.4 440.0 L732.3 433.0 L733.2 425.9 L734.1 419.0 L735.0 412.1 L735.9 405.3 L736.8 398.6 L737.7 392.0 L738.6 385.6 L739.5 379.2 L740.4 373.0 L741.3 366.9 L742.3 361.0 L743.2 355.2 L744.1 349.5 L745.0 344.0 L745.9 338.7 L746.8 333.6 L747.7 328.6 L748.6 323.7 L749.5 319.1 L750.4 314.6 L751.3 310.3 L752.2 306.2 L753.1 302.2 L754.0 298.5 L754.9 294.9 L755.8 291.4 L756.7 288.2 L757.6 285.1 L758.5 282.3 L759.4 279.6 L760.3 277.0 L761.2 274.7 L762.2 272.5 L763.1 270.5 L764.0 268.7 L764.9 267.1 L765.8 265.6 L766.7 264.4 L767.6 263.3 L768.5 262.4 L769.4 261.6 L770.3 261.1 L771.2 260.7 L772.1 260.4 L773.0 260.4 L773.9 260.5 L774.8 260.8 L775.7 261.3 L776.6 262.0 L777.5 262.9 L778.4 263.9 L779.3 265.1 L780.2 266.5 L781.1 268.0 L782.0 269.7 L783.0 271.6 L783.9 273.7 L784.8 275.8 L785.7 278.2 L786.6 280.6 L787.5 283.2 L788.4 286.0 L789.3 288.8 L790.2 291.8 L791.1 294.9 L792.0 298.1 L792.9 301.4 L793.8 304.8 L794.7 308.3 L795.6 311.9 L796.5 315.6 L797.4 319.3 L798.3 323.1 L799.2 327.0 L800.1 331.0 L801.0 335.0 L801.9 339.1 L802.9 343.3 L803.8 347.5 L804.7 351.7 L805.6 356.0 L806.5 360.4 L807.4 364.8 L808.3 369.2 L809.2 373.7 L810.1 378.3 L811.0 382.9 L811.9 387.5 L812.8 392.2 L813.7 396.9 L814.6 401.6 L815.5 406.4 L816.4 411.1 L817.3 415.9 L818.2 420.8 L819.1 425.6 L820.0 430.5 L820.9 435.3 L821.8 440.2 L822.7 445.0 L823.7 449.9 L824.6 454.7 L825.5 459.5 L826.4 464.9 L827.3 470.2 L828.2 475.6 L829.1 480.8 L830.0 486.1 L830.9 491.3 L831.8 496.4 L832.7 501.5 L833.6 506.6 L834.5 511.6 L835.4 516.5 L836.3 521.4 L837.2 526.3 L838.1 531.1 L839.0 535.8 L839.9 540.5 L840.8 545.1 L841.7 549.7 L842.6 554.2 L843.6 558.7 L844.5 563.1 L845.4 567.4 L846.3 571.7 L847.2 575.9 L848.1 580.1 L849.0 584.1 L849.9 588.1 L850.8 592.0 L851.7 595.8 L852.6 599.5 L853.5 603.2 L854.4 606.7 L855.3 610.1 L856.2 613.5 L857.1 616.7 L858.0 619.9 L858.9 622.9 L859.8 625.8 L860.7 628.7 L861.6 631.4 L862.5 634.0 L863.4 636.5 L864.4 638.9 L865.3 641.2 L866.2 643.5 L867.1 645.6 L868.0 647.6 L868.9 649.5 L869.8 651.3 L870.7 653.0 L871.6 654.7 L872.5 656.2 L873.4 657.6 L874.3 659.0 L875.2 660.3 L876.1 661.4 L877.0 662.5 L877.9 663.5 L878.8 664.4 L879.7 665.2 L880.6 665.9 L881.5 666.5 L882.4 667.1 L883.3 667.6 L884.3 668.0 L885.2 668.3 L886.1 668.5 L887.0 668.7 L887.9 668.7 L888.8 668.6 L889.7 668.5 L890.6 668.3 L891.5 668.0 L892.4 667.6 L893.3 667.2 L894.2 666.7 L895.1 666.2 L896.0 665.5 L896.9 664.9 L897.8 664.1 L898.7 663.4 L899.6 662.5 L900.5 661.6 L901.4 660.6 L902.3 659.6 L903.2 658.5 L904.1 657.4 L905.1 656.2 L906.0 655.0 L906.9 653.7 L907.8 652.4 L908.7 651.0 L909.6 649.6 L910.5 648.1 L911.4 646.6 L912.3 645.0 L913.2 643.4 L914.1 641.8 L915.0 640.2 L915.9 638.5 L916.8 636.8 L917.7 635.0 L918.6 633.3 L919.5 631.5 L920.4 629.7 L921.3 627.9 L922.2 626.0 L923.1 624.2 L924.0 622.3 L925.0 620.4 L925.9 618.5 L926.8 616.6 L927.7 614.6 L928.6 612.6 L929.5 610.6 L930.4 608.6 L931.3 606.5 L932.2 604.5 L933.1 602.4 L934.0 600.2 L934.9 598.1 L935.8 595.9 L936.7 593.7 L937.6 591.5 L938.5 589.2 L939.4 587.0 L940.3 584.7 L941.2 582.4 L942.1 580.0 L943.0 577.7 L943.9 575.3 L944.8 573.0 L945.8 570.6 L946.7 568.2 L947.6 565.8 L948.5 563.4 L949.4 561.0 L950.3 558.6 L951.2 556.2 L952.1 553.8 L953.0 551.4 L953.9 549.0 L954.8 546.6 L955.7 544.2 L956.6 541.8 L957.5 539.5 L958.4 537.1 L959.3 534.8 L960.2 532.4 L961.1 530.1 L962.0 527.8 L962.9 525.5 L963.8 523.2 L964.7 520.9 L965.7 518.6 L966.6 516.4 L967.5 514.1 L968.4 511.9 L969.3 509.6 L970.2 507.4 L971.1 505.2 L972.0 503.0 L972.9 500.8 L973.8 498.6 L974.7 496.4 L975.6 494.2 L976.5 492.0 L977.4 489.8 L978.3 487.6 L979.2 485.3 L980.1 483.1 L981.0 480.9 L981.9 478.7 L982.8 476.5 L983.7 474.2 L984.6 472.0 L985.5 469.7 L986.5 467.5 L987.4 465.2 L988.3 462.7 L989.2 460.1 L990.1 457.5 L991.0 455.0 L991.9 452.5 L992.8 449.9 L993.7 447.4 L994.6 444.9 L995.5 442.4 L996.4 439.9 L997.3 437.5 L998.2 435.1 L999.1 432.6 L1000.0 430.2 L1000.9 427.9 L1001.8 425.5 L1002.7 423.2 L1003.6 420.9 L1004.5 418.7 L1005.4 416.4 L1006.4 414.2 L1007.3 412.0 L1008.2 409.9 L1009.1 407.7 L1010.0 405.6 L1010.9 403.6 L1011.8 401.5 L1012.7 399.5 L1013.6 397.5 L1014.5 395.6 L1015.4 393.6 L1016.3 391.7 L1017.2 389.8 L1018.1 388.0 L1019.0 386.1 L1019.9 384.3 L1020.8 382.5 L1021.7 380.7 L1022.6 378.9 L1023.5 377.1 L1024.4 375.3 L1025.3 373.6 L1026.2 371.8 L1027.2 370.1 L1028.1 368.4 L1029.0 366.7 L1029.9 365.0 L1030.8 363.3 L1031.7 361.6 L1032.6 359.9 L1033.5 358.3 L1034.4 356.6 L1035.3 355.0 L1036.2 353.4 L1037.1 351.8 L1038.0 350.2 L1038.9 348.6 L1039.8 347.0 L1040.7 345.5 L1041.6 344.0 L1042.5 342.5 L1043.4 341.0 L1044.3 339.5 L1045.2 338.1 L1046.1 336.7 L1047.1 335.3 L1048.0 334.0 L1048.9 332.6 L1049.8 331.3 L1050.7 330.1 L1051.6 328.8 L1052.5 327.6 L1053.4 326.4 L1054.3 325.3 L1055.2 324.2 L1056.1 323.1 L1057.0 322.1 L1057.9 321.1 L1058.8 320.1 L1059.7 319.1 L1060.6 318.2 L1061.5 317.4 L1062.4 316.5 L1063.3 315.7 L1064.2 314.9 L1065.1 314.2 L1066.0 313.5 L1066.9 312.8 L1067.9 312.1 L1068.8 311.4 L1069.7 310.8 L1070.6 310.2 L1071.5 309.6 L1072.4 309.1 L1073.3 308.5 L1074.2 308.0 L1075.1 307.4 L1076.0 306.9 L1076.9 306.4 L1077.8 305.9 L1078.7 305.5 L1079.6 305.0 L1080.5 304.5 L1081.4 304.1 L1082.3 303.7 L1083.2 303.2 L1084.1 302.9 L1085.0 302.5 L1085.9 302.1 L1086.8 301.8 L1087.7 301.5 L1088.7 301.2 L1089.6 300.9 L1090.5 300.7 L1091.4 300.5 L1092.3 300.3 L1093.2 300.2 L1094.1 300.1 L1095.0 300.1 L1095.9 300.0 L1096.8 300.0 L1097.7 300.1 L1098.6 300.1 L1099.5 300.1 L1100.4 300.2 L1101.3 300.2 L1102.2 300.3 L1103.1 300.5 L1104.0 300.6 L1104.9 300.7 L1105.8 300.9 L1106.7 301.1 L1107.6 301.3 L1108.6 301.5 L1109.5 301.7 L1110.4 301.9 L1111.3 302.2 L1112.2 302.4 L1113.1 302.7 L1114.0 302.9 L1114.9 303.2 L1115.8 303.5 L1116.7 303.8 L1117.6 304.1 L1118.5 304.4 L1119.4 304.7 L1120.3 305.0 L1121.2 305.4 L1122.1 305.7 L1123.0 306.1 L1123.9 306.5 L1124.8 306.9 L1125.7 307.3 L1126.6 307.7 L1127.5 308.2 L1128.4 308.6 L1129.4 309.0 L1130.3 309.5 L1131.2 309.9 L1132.1 310.4 L1133.0 310.9 L1133.9 311.4 L1134.8 311.8 L1135.7 312.3 L1136.6 312.8 L1137.5 313.3 L1138.4 313.8 L1139.3 314.3 L1140.2 314.9 L1141.1 315.4 L1142.0 315.9 L1142.9 316.5 L1143.8 317.0 L1144.7 317.6 L1145.6 318.2 L1146.5 318.8 L1147.4 319.4 L1148.3 320.0 L1149.3 320.6 L1150.2 321.2 L1151.1 322.0 L1152.0 322.8 L1152.9 323.7 L1153.8 324.5 L1154.7 325.4 L1155.6 326.2 L1156.5 327.1 L1157.4 328.0 L1158.3 328.9 L1159.2 329.8 L1160.1 330.8 L1161.0 331.7 L1161.9 332.7 L1162.8 333.6 L1163.7 334.6 L1164.6 335.6 L1165.5 336.6 L1166.4 337.6 L1167.3 338.6 L1168.2 339.6 L1169.1 340.6 L1170.1 341.6 L1171.0 342.6 L1171.9 343.6 L1172.8 344.6 L1173.7 345.6 L1174.6 346.6 L1175.5 347.5 L1176.4 348.5 L1177.3 349.5 L1178.2 350.4 L1179.1 351.4 L1180.0 352.3 L1180.9 353.3 L1181.8 354.2 L1182.7 355.2 L1183.6 356.2 L1184.5 357.2 L1185.4 358.1 L1186.3 359.1 L1187.2 360.1 L1188.1 361.1 L1189.0 362.1 L1190.0 363.1 L1190.9 364.1 L1191.8 365.2 L1192.7 366.2 L1193.6 367.2 L1194.5 368.3 L1195.4 369.3 L1196.3 370.3 L1197.2 371.4 L1198.1 372.4 L1199.0 373.5 L1199.9 374.5 L1200.8 375.6 L1201.7 376.7 L1202.6 377.7 L1203.5 378.8 L1204.4 379.8 L1205.3 380.8 L1206.2 381.9 L1207.1 382.9 L1208.0 384.0 L1208.9 385.0 L1209.8 386.0 L1210.8 387.0 L1211.7 388.0 L1212.6 389.0 L1213.5 390.0 L1214.4 391.0 L1215.3 391.6 L1216.2 392.3 L1217.1 392.9 L1218.0 393.6 L1218.9 394.3 L1219.8 394.9 L1220.7 395.6 L1221.6 396.2 L1222.5 396.9 L1223.4 397.5 L1224.3 398.2 L1225.2 398.8 L1226.1 399.5 L1227.0 400.2 L1227.9 400.9 L1228.8 401.6 L1229.7 402.3 L1230.7 403.0 L1231.6 403.7 L1232.5 404.5 L1233.4 405.2 L1234.3 406.0 L1235.2 406.8 L1236.1 407.6 L1237.0 408.4 L1237.9 409.3 L1238.8 410.1 L1239.7 410.9 L1240.6 411.8 L1241.5 412.6 L1242.4 413.5 L1243.3 414.3 L1244.2 415.2 L1245.1 416.0 L1246.0 416.9 L1246.9 417.7 L1247.8 418.7 L1248.7 419.6 L1249.6 420.5 L1250.5 421.4 L1251.5 422.3 L1252.4 423.2 L1253.3 424.1 L1254.2 425.0 L1255.1 425.8 L1256.0 426.6 L1256.9 427.4 L1257.8 428.2 L1258.7 429.0 L1259.6 429.8 L1260.5 430.6 L1261.4 431.3 L1262.3 432.1 L1263.2 432.8 L1264.1 433.6 L1265.0 434.3 L1265.9 435.0 L1266.8 435.7 L1267.7 436.5 L1268.6 437.2 L1269.5 437.9 L1270.4 438.6 L1271.4 439.3 L1272.3 439.9 L1273.2 440.6 L1274.1 441.3 L1275.0 441.9 L1275.9 442.5 L1276.8 443.2 L1277.7 443.7 L1278.6 444.3 L1279.5 444.9 L1280.4 445.4 L1281.3 445.9 L1282.2 446.4 L1283.1 446.9 L1284.0 447.3 L1284.9 447.7 L1285.8 448.1 L1286.7 448.4 L1287.6 448.8 L1288.5 449.1 L1289.4 449.4 L1290.3 449.6 L1291.2 449.8 L1292.2 450.1 L1293.1 450.3 L1294.0 450.4 L1294.9 450.6 L1295.8 450.7 L1296.7 450.9 L1297.6 451.0 L1298.5 451.0 L1299.4 451.1 L1300.3 451.2 L1301.2 451.2 L1302.1 451.2 L1303.0 451.2 L1303.9 451.2 L1304.8 451.2 L1305.7 451.1 L1306.6 451.0 L1307.5 450.9 L1308.4 450.8 L1309.3 450.6 L1310.2 450.4 L1311.1 450.1" stroke="#7E2F8E" stroke-width="2"/>
<path d="M385.9 462.5 L386.8 462.5 L387.7 462.5 L388.6 462.5 L389.5 462.5 L390.4 462.5 L391.3 462.5 L392.2 462.5 L393.1 462.5 L394.0 462.5 L394.9 462.5 L395.9 462.5 L396.8 462.5 L397.7 462.5 L398.6 462.5 L399.5 462.5 L400.4 462.5 L401.3 462.5 L402.2 462.5 L403.1 462.5 L404.0 462.5 L404.9 462.5 L405.8 462.5 L406.7 462.5 L407.6 462.5 L408.5 462.5 L409.4 462.5 L410.3 461.6 L411.2 460.7 L412.1 459.9 L413.0 459.0 L413.9 459.4 L414.8 459.8 L415.8 460.2 L416.7 460.6 L417.6 461.0 L418.5 462.6 L419.4 464.2 L420.3 465.8 L421.2 470.3 L422.1 482.3 L423.0 485.3 L423.9 470.5 L424.8 440.8 L425.7 413.2 L426.6 408.2 L427.5 434.8 L428.4 484.1 L429.3 532.8 L430.2 546.3 L431.1 522.2 L432.0 472.3 L432.9 417.6 L433.8 379.9 L434.7 372.8 L435.6 397.9 L436.6 445.5 L437.5 498.8 L438.4 540.5 L439.3 558.1 L440.2 547.8 L441.1 512.7 L442.0 463.0 L442.9 412.8 L443.8 375.3 L444.7 360.0 L445.6 370.2 L446.5 403.1 L447.4 450.6 L448.3 502.0 L449.2 546.0 L450.1 573.6 L451.0 579.5 L451.9 562.9 L452.8 527.4 L453.7 479.9 L454.6 429.1 L455.5 383.9 L456.5 353.3 L457.4 341.2 L458.3 348.7 L459.2 373.8 L460.1 411.9 L461.0 457.2 L461.9 502.9 L462.8 543.0 L463.7 572.5 L464.6 588.0 L465.5 588.3 L466.4 574.1 L467.3 547.5 L468.2 512.2 L469.1 472.5 L470.0 432.7 L470.9 397.0 L471.8 368.9 L472.7 351.8 L473.6 346.1 L474.5 351.6 L475.4 367.0 L476.3 390.3 L477.3 418.9 L478.2 449.9 L479.1 480.7 L480.0 508.7 L480.9 533.0 L481.8 552.7 L482.7 565.9 L483.6 571.7 L484.5 569.7 L485.4 560.1 L486.3 543.8 L487.2 521.8 L488.1 495.6 L489.0 467.0 L489.9 437.7 L490.8 409.4 L491.7 383.8 L492.6 362.4 L493.5 346.2 L494.4 335.9 L495.3 332.1 L496.2 334.9 L497.2 344.2 L498.1 359.5 L499.0 379.8 L499.9 404.3 L500.8 431.8 L501.7 461.0 L502.6 490.5 L503.5 519.1 L504.4 545.6 L505.3 569.0 L506.2 588.2 L507.1 601.4 L508.0 609.1 L508.9 611.1 L509.8 607.7 L510.7 599.1 L511.6 585.7 L512.5 568.2 L513.4 547.3 L514.3 523.7 L515.2 498.3 L516.1 472.1 L517.0 445.7 L518.0 420.2 L518.9 396.1 L519.8 374.2 L520.7 355.1 L521.6 339.1 L522.5 326.8 L523.4 318.3 L524.3 313.7 L525.2 313.0 L526.1 316.2 L527.0 323.1 L527.9 333.4 L528.8 346.8 L529.7 362.8 L530.6 381.0 L531.5 401.0 L532.4 422.2 L533.3 444.2 L534.2 466.4 L535.1 488.5 L536.0 509.8 L536.9 530.1 L537.9 548.9 L538.8 565.9 L539.7 580.8 L540.6 593.4 L541.5 603.5 L542.4 610.9 L543.3 615.7 L544.2 617.2 L545.1 616.1 L546.0 612.4 L546.9 606.2 L547.8 597.7 L548.7 587.2 L549.6 574.9 L550.5 560.9 L551.4 545.6 L552.3 529.3 L553.2 512.2 L554.1 494.6 L555.0 476.8 L555.9 459.0 L556.8 441.5 L557.7 424.6 L558.7 408.4 L559.6 393.2 L560.5 379.2 L561.4 366.4 L562.3 355.0 L563.2 345.1 L564.1 336.8 L565.0 330.1 L565.9 325.1 L566.8 321.7 L567.7 320.0 L568.6 319.9 L569.5 320.1 L570.4 321.9 L571.3 325.1 L572.2 329.8 L573.1 335.8 L574.0 343.1 L574.9 351.6 L575.8 361.3 L576.7 371.9 L577.6 383.4 L578.6 395.6 L579.5 408.5 L580.4 421.9 L581.3 435.7 L582.2 449.7 L583.1 463.9 L584.0 478.0 L584.9 492.0 L585.8 505.7 L586.7 519.1 L587.6 531.9 L588.5 544.2 L589.4 555.9 L590.3 566.8 L591.2 576.8 L592.1 586.0 L593.0 594.2 L593.9 601.4 L594.8 607.6 L595.7 612.7 L596.6 616.8 L597.5 619.7 L598.4 621.6 L599.4 622.3 L600.3 621.9 L601.2 620.4 L602.1 617.8 L603.0 614.2 L603.9 609.6 L604.8 604.0 L605.7 597.5 L606.6 590.2 L607.5 582.0 L608.4 573.0 L609.3 563.4 L610.2 553.2 L611.1 542.4 L612.0 531.1 L612.9 519.5 L613.8 507.5 L614.7 495.3 L615.6 482.8 L616.5 470.3 L617.4 457.7 L618.3 441.2 L619.2 424.9 L620.2 409.0 L621.1 393.4 L622.0 378.5 L622.9 364.2 L623.8 350.7 L624.7 338.0 L625.6 326.3 L626.5 315.5 L627.4 305.8 L628.3 297.1 L629.2 289.4 L630.1 282.8 L631.0 277.2 L631.9 272.7 L632.8 269.1 L633.7 266.6 L634.6 265.7 L635.5 265.7 L636.4 266.5 L637.3 268.2 L638.2 270.6 L639.1 273.7 L640.1 277.4 L641.0 281.7 L641.9 286.5 L642.8 291.7 L643.7 297.4 L644.6 303.4 L645.5 309.7 L646.4 316.3 L647.3 323.1 L648.2 330.1 L649.1 337.3 L650.0 344.6 L650.9 352.1 L651.8 359.6 L652.7 367.3 L653.6 374.9 L654.5 382.7 L655.4 390.4 L656.3 398.2 L657.2 406.0 L658.1 413.8 L659.0 421.6 L659.9 429.3 L660.9 437.0 L661.8 444.6 L662.7 452.2 L663.6 459.8 L664.5 470.4 L665.4 480.9 L666.3 491.2 L667.2 501.4 L668.1 511.4 L669.0 521.2 L669.9 530.8 L670.8 540.1 L671.7 549.2 L672.6 557.9 L673.5 566.4 L674.4 574.5 L675.3 582.4 L676.2 589.9 L677.1 597.0 L678.0 603.7 L678.9 610.1 L679.8 616.1 L680.8 621.7 L681.7 626.8 L682.6 631.5 L683.5 635.9 L684.4 639.7 L685.3 643.2 L686.2 646.2 L687.1 648.7 L688.0 650.9 L688.9 652.6 L689.8 653.9 L690.7 654.8 L691.6 655.3 L692.5 655.4 L693.4 655.3 L694.3 654.8 L695.2 653.9 L696.1 652.7 L697.0 651.2 L697.9 649.3 L698.8 647.1 L699.7 644.7 L700.6 641.9 L701.6 638.8 L702.5 635.5 L703.4 631.9 L704.3 628.0 L705.2 623.9 L706.1 619.5 L707.0 614.9 L707.9 610.0 L708.8 604.9 L709.7 599.6 L710.6 594.1 L711.5 588.4 L712.4 582.5 L713.3 576.4 L714.2 570.1 L715.1 563.7 L716.0 557.1 L716.9 550.4 L717.8 543.6 L718.7 536.6 L719.6 529.6 L720.5 522.5 L721.5 515.4 L722.4 508.1 L723.3 500.9 L724.2 493.6 L725.1 486.3 L726.0 479.0 L726.9 471.7 L727.8 464.4 L728.7 457.1 L729.6 449.9 L730.5 442.7 L731.4 435.6 L732.3 428.6 L733.2 421.7 L734.1 414.9 L735.0 408.2 L735.9 401.6 L736.8 395.2 L737.7 388.9 L738.6 382.8 L739.5 376.8 L740.4 371.0 L741.3 365.4 L742.3 359.9 L743.2 354.5 L744.1 349.3 L745.0 344.2 L745.9 339.3 L746.8 334.5 L747.7 329.9 L748.6 325.4 L749.5 321.1 L750.4 316.8 L751.3 312.7 L752.2 308.8 L753.1 304.9 L754.0 301.2 L754.9 297.7 L755.8 294.2 L756.7 290.9 L757.6 287.8 L758.5 284.8 L759.4 282.0 L760.3 279.4 L761.2 276.9 L762.2 274.7 L763.1 272.6 L764.0 270.7 L764.9 269.0 L765.8 267.6 L766.7 266.3 L767.6 265.2 L768.5 264.3 L769.4 263.5 L770.3 263.0 L771.2 262.5 L772.1 262.2 L773.0 262.1 L773.9 262.1 L774.8 262.3 L775.7 262.6 L776.6 263.0 L777.5 263.6 L778.4 264.4 L779.3 265.4 L780.2 266.5 L781.1 267.8 L782.0 269.2 L783.0 270.9 L783.9 272.7 L784.8 274.7 L785.7 276.9 L786.6 279.3 L787.5 281.9 L788.4 284.6 L789.3 287.5 L790.2 290.5 L791.1 293.7 L792.0 297.1 L792.9 300.5 L793.8 304.1 L794.7 307.8 L795.6 311.5 L796.5 315.4 L797.4 319.3 L798.3 323.3 L799.2 327.3 L800.1 331.4 L801.0 335.5 L801.9 339.7 L802.9 343.9 L803.8 348.1 L804.7 352.3 L805.6 356.5 L806.5 360.8 L807.4 365.1 L808.3 369.3 L809.2 373.6 L810.1 378.0 L811.0 382.3 L811.9 386.7 L812.8 391.2 L813.7 395.7 L814.6 400.2 L815.5 404.8 L816.4 409.5 L817.3 414.2 L818.2 419.0 L819.1 423.9 L820.0 428.8 L820.9 433.8 L821.8 438.8 L822.7 443.9 L823.7 448.9 L824.6 454.0 L825.5 459.1 L826.4 464.8 L827.3 470.4 L828.2 476.0 L829.1 481.6 L830.0 487.1 L830.9 492.5 L831.8 497.9 L832.7 503.2 L833.6 508.4 L834.5 513.6 L835.4 518.7 L836.3 523.8 L837.2 528.8 L838.1 533.8 L839.0 538.7 L839.9 543.5 L840.8 548.3 L841.7 553.0 L842.6 557.7 L843.6 562.3 L844.5 566.8 L845.4 571.1 L846.3 575.4 L847.2 579.6 L848.1 583.6 L849.0 587.6 L849.9 591.3 L850.8 595.0 L851.7 598.5 L852.6 601.9 L853.5 605.1 L854.4 608.2 L855.3 611.3 L856.2 614.2 L857.1 617.1 L858.0 619.8 L858.9 622.6 L859.8 625.2 L860.7 627.9 L861.6 630.4 L862.5 633.0 L863.4 635.5 L864.4 638.1 L865.3 640.5 L866.2 643.0 L867.1 645.4 L868.0 647.7 L868.9 650.0 L869.8 652.3 L870.7 654.5 L871.6 656.6 L872.5 658.6 L873.4 660.5 L874.3 662.4 L875.2 664.2 L876.1 665.8 L877.0 667.4 L877.9 668.8 L878.8 670.2 L879.7 671.4 L880.6 672.5 L881.5 673.4 L882.4 674.2 L883.3 674.9 L884.3 675.4 L885.2 675.8 L886.1 676.0 L887.0 676.0 L887.9 676.0 L888.8 675.7 L889.7 675.2 L890.6 674.7 L891.5 674.1 L892.4 673.3 L893.3 672.6 L894.2 671.7 L895.1 670.9 L896.0 670.0 L896.9 669.1 L897.8 668.2 L898.7 667.4 L899.6 666.5 L900.5 665.7 L901.4 664.9 L902.3 664.1 L903.2 663.3 L904.1 662.5 L905.1 661.7 L906.0 660.9 L906.9 660.1 L907.8 659.2 L908.7 658.3 L909.6 657.3 L910.5 656.3 L911.4 655.2 L912.3 654.0 L913.2 652.7 L914.1 651.4 L915.0 650.0 L915.9 648.5 L916.8 646.9 L917.7 645.2 L918.6 643.5 L919.5 641.6 L920.4 639.7 L921.3 637.7 L922.2 635.6 L923.1 633.5 L924.0 631.3 L925.0 629.0 L925.9 626.6 L926.8 624.2 L927.7 621.7 L928.6 619.2 L929.5 616.6 L930.4 614.0 L931.3 611.4 L932.2 608.7 L933.1 606.1 L934.0 603.5 L934.9 601.0 L935.8 598.5 L936.7 596.0 L937.6 593.7 L938.5 591.4 L939.4 589.3 L940.3 587.2 L941.2 585.2 L942.1 583.3 L943.0 581.4 L943.9 579.6 L944.8 577.7 L945.8 575.9 L946.7 574.1 L947.6 572.3 L948.5 570.3 L949.4 568.4 L950.3 566.3 L951.2 564.1 L952.1 561.9 L953.0 559.5 L953.9 557.0 L954.8 554.5 L955.7 551.8 L956.6 549.1 L957.5 546.3 L958.4 543.5 L959.3 540.6 L960.2 537.7 L961.1 534.8 L962.0 531.9 L962.9 529.0 L963.8 526.2 L964.7 523.3 L965.7 520.5 L966.6 517.7 L967.5 514.9 L968.4 512.2 L969.3 509.5 L970.2 506.8 L971.1 504.2 L972.0 501.5 L972.9 498.9 L973.8 496.3 L974.7 493.7 L975.6 491.1 L976.5 488.5 L977.4 485.9 L978.3 483.3 L979.2 480.7 L980.1 478.1 L981.0 475.6 L981.9 473.0 L982.8 470.5 L983.7 468.0 L984.6 465.6 L985.5 463.2 L986.5 460.8 L987.4 458.6 L988.3 456.0 L989.2 453.5 L990.1 451.1 L991.0 448.7 L991.9 446.4 L992.8 444.1 L993.7 441.9 L994.6 439.8 L995.5 437.6 L996.4 435.5 L997.3 433.4 L998.2 431.3 L999.1 429.2 L1000.0 427.1 L1000.9 425.0 L1001.8 422.8 L1002.7 420.7 L1003.6 418.6 L1004.5 416.4 L1005.4 414.2 L1006.4 412.1 L1007.3 409.9 L1008.2 407.8 L1009.1 405.7 L1010.0 403.6 L1010.9 401.5 L1011.8 399.5 L1012.7 397.5 L1013.6 395.6 L1014.5 393.6 L1015.4 391.7 L1016.3 389.8 L1017.2 388.0 L1018.1 386.2 L1019.0 384.4 L1019.9 382.6 L1020.8 380.9 L1021.7 379.1 L1022.6 377.5 L1023.5 375.8 L1024.4 374.2 L1025.3 372.6 L1026.2 371.0 L1027.2 369.5 L1028.1 368.0 L1029.0 366.5 L1029.9 365.0 L1030.8 363.5 L1031.7 362.1 L1032.6 360.6 L1033.5 359.1 L1034.4 357.7 L1035.3 356.2 L1036.2 354.7 L1037.1 353.2 L1038.0 351.7 L1038.9 350.2 L1039.8 348.7 L1040.7 347.2 L1041.6 345.7 L1042.5 344.2 L1043.4 342.7 L1044.3 341.2 L1045.2 339.7 L1046.1 338.3 L1047.1 336.8 L1048.0 335.5 L1048.9 334.1 L1049.8 332.8 L1050.7 331.5 L1051.6 330.3 L1052.5 329.2 L1053.4 328.1 L1054.3 327.0 L1055.2 326.0 L1056.1 325.1 L1057.0 324.2 L1057.9 323.4 L1058.8 322.6 L1059.7 321.8 L1060.6 321.1 L1061.5 320.4 L1062.4 319.7 L1063.3 319.1 L1064.2 318.5 L1065.1 317.9 L1066.0 317.3 L1066.9 316.7 L1067.9 316.1 L1068.8 315.5 L1069.7 314.9 L1070.6 314.3 L1071.5 313.7 L1072.4 313.1 L1073.3 312.4 L1074.2 311.7 L1075.1 311.1 L1076.0 310.4 L1076.9 309.7 L1077.8 309.1 L1078.7 308.4 L1079.6 307.8 L1080.5 307.2 L1081.4 306.6 L1082.3 306.2 L1083.2 305.7 L1084.1 305.3 L1085.0 305.0 L1085.9 304.8 L1086.8 304.6 L1087.7 304.4 L1088.7 304.4 L1089.6 304.4 L1090.5 304.4 L1091.4 304.5 L1092.3 304.7 L1093.2 304.9 L1094.1 305.2 L1095.0 305.5 L1095.9 305.8 L1096.8 306.2 L1097.7 306.6 L1098.6 307.0 L1099.5 307.4 L1100.4 307.8 L1101.3 308.2 L1102.2 308.6 L1103.1 309.0 L1104.0 309.4 L1104.9 309.7 L1105.8 310.0 L1106.7 310.2 L1107.6 310.4 L1108.6 310.6 L1109.5 310.7 L1110.4 310.8 L1111.3 310.8 L1112.2 310.8 L1113.1 310.8 L1114.0 310.8 L1114.9 310.8 L1115.8 310.8 L1116.7 310.8 L1117.6 310.9 L1118.5 311.0 L1119.4 311.1 L1120.3 311.2 L1121.2 311.4 L1122.1 311.6 L1123.0 311.8 L1123.9 312.0 L1124.8 312.3 L1125.7 312.6 L1126.6 312.8 L1127.5 313.1 L1128.4 313.4 L1129.4 313.7 L1130.3 314.0 L1131.2 314.2 L1132.1 314.5 L1133.0 314.7 L1133.9 315.0 L1134.8 315.2 L1135.7 315.5 L1136.6 315.8 L1137.5 316.0 L1138.4 316.4 L1139.3 316.7 L1140.2 317.0 L1141.1 317.4 L1142.0 317.9 L1142.9 318.3 L1143.8 318.8 L1144.7 319.4 L1145.6 320.0 L1146.5 320.6 L1147.4 321.2 L1148.3 321.8 L1149.3 322.5 L1150.2 323.2 L1151.1 324.0 L1152.0 324.9 L1152.9 325.7 L1153.8 326.5 L1154.7 327.4 L1155.6 328.2 L1156.5 329.0 L1157.4 329.8 L1158.3 330.7 L1159.2 331.5 L1160.1 332.3 L1161.0 333.1 L1161.9 333.9 L1162.8 334.7 L1163.7 335.5 L1164.6 336.2 L1165.5 337.0 L1166.4 337.8 L1167.3 338.5 L1168.2 339.2 L1169.1 339.8 L1170.1 340.4 L1171.0 341.0 L1171.9 341.6 L1172.8 342.1 L1173.7 342.6 L1174.6 343.1 L1175.5 343.6 L1176.4 344.1 L1177.3 344.5 L1178.2 345.1 L1179.1 345.6 L1180.0 346.2 L1180.9 346.8 L1181.8 347.5 L1182.7 348.3 L1183.6 349.2 L1184.5 350.1 L1185.4 351.1 L1186.3 352.2 L1187.2 353.3 L1188.1 354.5 L1189.0 355.8 L1190.0 357.2 L1190.9 358.6 L1191.8 360.0 L1192.7 361.5 L1193.6 363.0 L1194.5 364.5 L1195.4 366.0 L1196.3 367.5 L1197.2 368.9 L1198.1 370.3 L1199.0 371.7 L1199.9 373.0 L1200.8 374.3 L1201.7 375.5 L1202.6 376.6 L1203.5 377.6 L1204.4 378.6 L1205.3 379.6 L1206.2 380.5 L1207.1 381.4 L1208.0 382.2 L1208.9 383.0 L1209.8 383.8 L1210.8 384.7 L1211.7 385.5 L1212.6 386.3 L1213.5 387.2 L1214.4 388.0 L1215.3 388.6 L1216.2 389.3 L1217.1 389.9 L1218.0 390.6 L1218.9 391.4 L1219.8 392.1 L1220.7 392.9 L1221.6 393.8 L1222.5 394.6 L1223.4 395.5 L1224.3 396.4 L1225.2 397.2 L1226.1 398.1 L1227.0 399.0 L1227.9 399.9 L1228.8 400.8 L1229.7 401.7 L1230.7 402.6 L1231.6 403.4 L1232.5 404.2 L1233.4 405.0 L1234.3 405.8 L1235.2 406.5 L1236.1 407.2 L1237.0 407.9 L1237.9 408.6 L1238.8 409.3 L1239.7 410.1 L1240.6 410.8 L1241.5 411.5 L1242.4 412.3 L1243.3 413.2 L1244.2 414.0 L1245.1 414.9 L1246.0 415.9 L1246.9 416.9 L1247.8 418.1 L1248.7 419.3 L1249.6 420.5 L1250.5 421.7 L1251.5 423.0 L1252.4 424.2 L1253.3 425.4 L1254.2 426.6 L1255.1 427.8 L1256.0 429.0 L1256.9 430.1 L1257.8 431.2 L1258.7 432.2 L1259.6 433.2 L1260.5 434.2 L1261.4 435.1 L1262.3 435.9 L1263.2 436.8 L1264.1 437.5 L1265.0 438.3 L1265.9 438.9 L1266.8 439.5 L1267.7 440.1 L1268.6 440.6 L1269.5 441.1 L1270.4 441.5 L1271.4 441.9 L1272.3 442.2 L1273.2 442.5 L1274.1 442.8 L1275.0 443.0 L1275.9 443.2 L1276.8 443.4 L1277.7 443.7 L1278.6 443.9 L1279.5 444.2 L1280.4 444.5 L1281.3 444.9 L1282.2 445.3 L1283.1 445.7 L1284.0 446.2 L1284.9 446.8 L1285.8 447.3 L1286.7 447.9 L1287.6 448.6 L1288.5 449.3 L1289.4 449.9 L1290.3 450.6 L1291.2 451.3 L1292.2 452.0 L1293.1 452.7 L1294.0 453.4 L1294.9 454.1 L1295.8 454.7 L1296.7 455.4 L1297.6 456.0 L1298.5 456.5 L1299.4 457.1 L1300.3 457.6 L1301.2 458.1 L1302.1 458.5 L1303.0 458.9 L1303.9 459.2 L1304.8 459.5 L1305.7 459.8 L1306.6 459.9 L1307.5 460.1 L1308.4 460.1 L1309.3 460.1 L1310.2 459.9 L1311.1 459.7" stroke="#77AC30" stroke-width="1"/>
</g>
<rect x="384.5" y="154.5" width="926.0" height="614.0" fill="none" stroke="#000000" stroke-width="1.15"/>
<rect x="399.5" y="189.5" width="159" height="107" fill="#FFFFFF" stroke="#000000" stroke-width="1.05"/>
<path d="M404.4 200.40H436.4" stroke="#0072BD" stroke-width="1"/>
<path d="M404.4 217.35H436.4" stroke="#000000" stroke-width="1.2" stroke-dasharray="8,4"/>
<path d="M404.4 234.30H436.4" stroke="#D95319" stroke-width="1"/>
<path d="M404.4 251.25H436.4" stroke="#EDB120" stroke-width="1"/>
<path d="M404.4 268.20H436.4" stroke="#7E2F8E" stroke-width="2"/>
<path d="M404.4 285.15H436.4" stroke="#77AC30" stroke-width="1"/>
</svg>
<div class="t" style="left:438.70px;top:192.70px;font-size:13px;color:#262626;">noisdopp</div>
<div class="t" style="left:438.70px;top:209.65px;font-size:13px;color:#262626;">Approximation</div>
<div class="t" style="left:438.70px;top:226.60px;font-size:13px;color:#262626;">noisdopp1</div>
<div class="t" style="left:438.70px;top:243.55px;font-size:13px;color:#262626;">noisdopp1_db2</div>
<div class="t" style="left:438.70px;top:260.50px;font-size:13px;color:#262626;">noisdopp1_coif4</div>
<div class="t" style="left:438.70px;top:277.45px;font-size:13px;color:#262626;">noisdopp1_coif4_fbr</div>
<div class="t" style="left:381.25px;top:772.77px;font-size:13.5px;color:#262626;">0</div>
<div class="t" style="left:464.19px;top:772.77px;font-size:13.5px;color:#262626;">100</div>
<div class="t" style="left:554.63px;top:772.77px;font-size:13.5px;color:#262626;">200</div>
<div class="t" style="left:645.07px;top:772.77px;font-size:13.5px;color:#262626;">300</div>
<div class="t" style="left:735.52px;top:772.77px;font-size:13.5px;color:#262626;">400</div>
<div class="t" style="left:825.96px;top:772.77px;font-size:13.5px;color:#262626;">500</div>
<div class="t" style="left:916.40px;top:772.77px;font-size:13.5px;color:#262626;">600</div>
<div class="t" style="left:1006.85px;top:772.77px;font-size:13.5px;color:#262626;">700</div>
<div class="t" style="left:1097.29px;top:772.77px;font-size:13.5px;color:#262626;">800</div>
<div class="t" style="left:1187.74px;top:772.77px;font-size:13.5px;color:#262626;">900</div>
<div class="t" style="left:1274.42px;top:772.77px;font-size:13.5px;color:#262626;">1000</div>
<div class="t" style="left:359.49px;top:747.27px;font-size:13.5px;color:#262626;">-10</div>
<div class="t" style="left:367.00px;top:688.87px;font-size:13.5px;color:#262626;">-8</div>
<div class="t" style="left:367.00px;top:630.47px;font-size:13.5px;color:#262626;">-6</div>
<div class="t" style="left:367.00px;top:572.07px;font-size:13.5px;color:#262626;">-4</div>
<div class="t" style="left:367.00px;top:513.67px;font-size:13.5px;color:#262626;">-2</div>
<div class="t" style="left:371.49px;top:455.27px;font-size:13.5px;color:#262626;">0</div>
<div class="t" style="left:371.49px;top:396.87px;font-size:13.5px;color:#262626;">2</div>
<div class="t" style="left:371.49px;top:338.47px;font-size:13.5px;color:#262626;">4</div>
<div class="t" style="left:371.49px;top:280.07px;font-size:13.5px;color:#262626;">6</div>
<div class="t" style="left:371.49px;top:221.67px;font-size:13.5px;color:#262626;">8</div>
<div class="t" style="left:363.99px;top:163.27px;font-size:13.5px;color:#262626;">10</div>
<div class="t" style="left:822.00px;top:788.10px;font-size:13px;color:#262626;">Samples</div>
<div class="t" style="left:345.0px;top:461px;font-size:13px;color:#262626;transform:translate(-50%,-50%) rotate(-90deg);transform-origin:center">Amplitude</div>
</body></html>
